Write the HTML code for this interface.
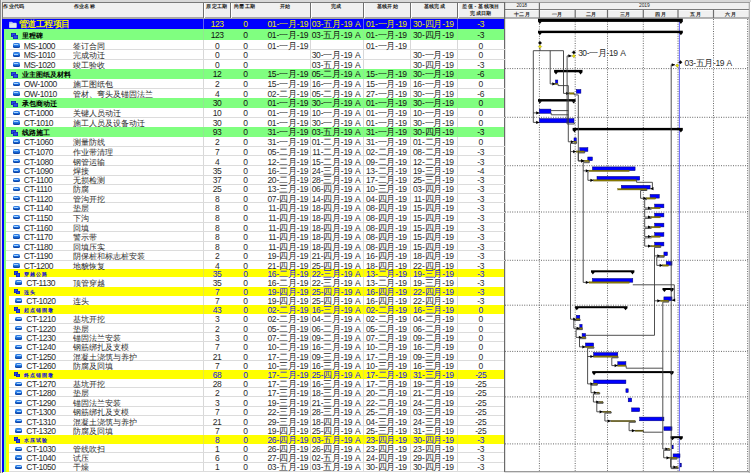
<!DOCTYPE html><html><head><meta charset="utf-8"><style>
*{margin:0;padding:0;box-sizing:border-box}
html,body{width:751px;height:473px;overflow:hidden;background:#fff;position:relative;font-family:"Liberation Sans",sans-serif}
.a{position:absolute}
.t{position:absolute;white-space:nowrap;font-size:8.5px;line-height:10px;color:#2a2a2a;letter-spacing:-0.45px}
.t em{font-style:normal;padding:0 0.35px}
.t em.sp{padding:0 0.5px}
.t i{font-style:normal;font-size:8.6px;line-height:1px;vertical-align:baseline}
.ic{position:absolute;width:6.6px;height:4.6px;border-radius:1.8px;background:linear-gradient(#2a70d8,#3a90f0 35%,#1a68d8 60%,#0a48b0);box-shadow:inset 0 -0.6px 0 #083890}
.ic:after{content:"";position:absolute;left:1.4px;right:1.4px;top:1.3px;height:0.8px;background:#a8d4ff}
.wi{position:absolute;width:4.2px;height:4px;background:#2a48e8;box-shadow:inset 0 0 0 0.6px #10209a}
.hd{position:absolute;white-space:nowrap;font-size:5.1px;line-height:6px;color:#1a1a1a;font-weight:bold;letter-spacing:0.35px}
</style></head><body><div class="a" style="left:0;top:0;width:751px;height:1.6px;background:#d8d8d8"></div>
<div class="a" style="left:0;top:1.6px;width:751px;height:1.1px;background:#787878"></div>
<div class="a" style="left:0;top:0;width:0.9px;height:473px;background:#909090"></div>
<div class="a" style="left:0.9px;top:0;width:0.8px;height:473px;background:#e8e8e8"></div>
<div class="a" style="left:1.6px;top:1.6px;width:1px;height:472px;background:#787878"></div>
<div class="a" style="left:2.6px;top:2.7px;width:746px;height:15.5px;background:#f0f0f0"></div>
<div class="a" style="left:2.6px;top:17.4px;width:502px;height:1.2px;background:#a8a8a8"></div>
<div class="a" style="left:202.6px;top:2.7px;width:1.2px;height:15.5px;background:#6e6e6e"></div>
<div class="a" style="left:203.8px;top:2.7px;width:0.9px;height:15.5px;background:#fff"></div>
<div class="a" style="left:229.9px;top:2.7px;width:1.2px;height:15.5px;background:#6e6e6e"></div>
<div class="a" style="left:231.1px;top:2.7px;width:0.9px;height:15.5px;background:#fff"></div>
<div class="a" style="left:309.9px;top:2.7px;width:1.2px;height:15.5px;background:#6e6e6e"></div>
<div class="a" style="left:311.1px;top:2.7px;width:0.9px;height:15.5px;background:#fff"></div>
<div class="a" style="left:362.5px;top:2.7px;width:1.2px;height:15.5px;background:#6e6e6e"></div>
<div class="a" style="left:363.7px;top:2.7px;width:0.9px;height:15.5px;background:#fff"></div>
<div class="a" style="left:409.6px;top:2.7px;width:1.2px;height:15.5px;background:#6e6e6e"></div>
<div class="a" style="left:410.8px;top:2.7px;width:0.9px;height:15.5px;background:#fff"></div>
<div class="a" style="left:456.6px;top:2.7px;width:1.2px;height:15.5px;background:#6e6e6e"></div>
<div class="a" style="left:457.8px;top:2.7px;width:0.9px;height:15.5px;background:#fff"></div>
<div class="a" style="left:2.2px;top:19.0px;width:502.3px;height:10.40px;background:#0000ff"></div>
<div class="a" style="left:203.1px;top:19.0px;width:1px;height:10.40px;background:#6060f0"></div>
<div class="a" style="left:310.0px;top:19.0px;width:1px;height:10.40px;background:#6060f0"></div>
<div class="a" style="left:362.6px;top:19.0px;width:1px;height:10.40px;background:#6060f0"></div>
<div class="a" style="left:409.7px;top:19.0px;width:1px;height:10.40px;background:#6060f0"></div>
<div class="a" style="left:456.7px;top:19.0px;width:1px;height:10.40px;background:#6060f0"></div>
<div class="a" style="left:2.2px;top:29.4px;width:502.3px;height:11.00px;background:#80ff80"></div>
<div class="a" style="left:2.2px;top:29.4px;width:1.9px;height:11.60px;background:#0000ff"></div>
<div class="a" style="left:203.1px;top:29.4px;width:1px;height:11.00px;background:#90e890"></div>
<div class="a" style="left:310.0px;top:29.4px;width:1px;height:11.00px;background:#90e890"></div>
<div class="a" style="left:362.6px;top:29.4px;width:1px;height:11.00px;background:#90e890"></div>
<div class="a" style="left:409.7px;top:29.4px;width:1px;height:11.00px;background:#90e890"></div>
<div class="a" style="left:456.7px;top:29.4px;width:1px;height:11.00px;background:#90e890"></div>
<div class="a" style="left:2.2px;top:40.4px;width:502.3px;height:9.30px;background:#ffffff"></div>
<div class="a" style="left:2.2px;top:40.4px;width:1.9px;height:9.90px;background:#0000ff"></div>
<div class="a" style="left:4.1px;top:40.4px;width:1.9px;height:9.90px;background:#80ff80"></div>
<div class="a" style="left:203.1px;top:40.4px;width:1px;height:9.30px;background:#d8d8d8"></div>
<div class="a" style="left:310.0px;top:40.4px;width:1px;height:9.30px;background:#d8d8d8"></div>
<div class="a" style="left:362.6px;top:40.4px;width:1px;height:9.30px;background:#d8d8d8"></div>
<div class="a" style="left:409.7px;top:40.4px;width:1px;height:9.30px;background:#d8d8d8"></div>
<div class="a" style="left:456.7px;top:40.4px;width:1px;height:9.30px;background:#d8d8d8"></div>
<div class="a" style="left:2.2px;top:49.7px;width:502.3px;height:9.60px;background:#ffffff"></div>
<div class="a" style="left:2.2px;top:49.7px;width:1.9px;height:10.20px;background:#0000ff"></div>
<div class="a" style="left:4.1px;top:49.7px;width:1.9px;height:10.20px;background:#80ff80"></div>
<div class="a" style="left:203.1px;top:49.7px;width:1px;height:9.60px;background:#d8d8d8"></div>
<div class="a" style="left:310.0px;top:49.7px;width:1px;height:9.60px;background:#d8d8d8"></div>
<div class="a" style="left:362.6px;top:49.7px;width:1px;height:9.60px;background:#d8d8d8"></div>
<div class="a" style="left:409.7px;top:49.7px;width:1px;height:9.60px;background:#d8d8d8"></div>
<div class="a" style="left:456.7px;top:49.7px;width:1px;height:9.60px;background:#d8d8d8"></div>
<div class="a" style="left:2.2px;top:59.3px;width:502.3px;height:9.30px;background:#ffffff"></div>
<div class="a" style="left:2.2px;top:59.3px;width:1.9px;height:9.90px;background:#0000ff"></div>
<div class="a" style="left:4.1px;top:59.3px;width:1.9px;height:9.90px;background:#80ff80"></div>
<div class="a" style="left:203.1px;top:59.3px;width:1px;height:9.30px;background:#d8d8d8"></div>
<div class="a" style="left:310.0px;top:59.3px;width:1px;height:9.30px;background:#d8d8d8"></div>
<div class="a" style="left:362.6px;top:59.3px;width:1px;height:9.30px;background:#d8d8d8"></div>
<div class="a" style="left:409.7px;top:59.3px;width:1px;height:9.30px;background:#d8d8d8"></div>
<div class="a" style="left:456.7px;top:59.3px;width:1px;height:9.30px;background:#d8d8d8"></div>
<div class="a" style="left:2.2px;top:68.6px;width:502.3px;height:10.20px;background:#80ff80"></div>
<div class="a" style="left:2.2px;top:68.6px;width:1.9px;height:10.80px;background:#0000ff"></div>
<div class="a" style="left:203.1px;top:68.6px;width:1px;height:10.20px;background:#90e890"></div>
<div class="a" style="left:310.0px;top:68.6px;width:1px;height:10.20px;background:#90e890"></div>
<div class="a" style="left:362.6px;top:68.6px;width:1px;height:10.20px;background:#90e890"></div>
<div class="a" style="left:409.7px;top:68.6px;width:1px;height:10.20px;background:#90e890"></div>
<div class="a" style="left:456.7px;top:68.6px;width:1px;height:10.20px;background:#90e890"></div>
<div class="a" style="left:2.2px;top:78.8px;width:502.3px;height:9.50px;background:#ffffff"></div>
<div class="a" style="left:2.2px;top:78.8px;width:1.9px;height:10.10px;background:#0000ff"></div>
<div class="a" style="left:4.1px;top:78.8px;width:1.9px;height:10.10px;background:#80ff80"></div>
<div class="a" style="left:203.1px;top:78.8px;width:1px;height:9.50px;background:#d8d8d8"></div>
<div class="a" style="left:310.0px;top:78.8px;width:1px;height:9.50px;background:#d8d8d8"></div>
<div class="a" style="left:362.6px;top:78.8px;width:1px;height:9.50px;background:#d8d8d8"></div>
<div class="a" style="left:409.7px;top:78.8px;width:1px;height:9.50px;background:#d8d8d8"></div>
<div class="a" style="left:456.7px;top:78.8px;width:1px;height:9.50px;background:#d8d8d8"></div>
<div class="a" style="left:2.2px;top:88.3px;width:502.3px;height:9.50px;background:#ffffff"></div>
<div class="a" style="left:2.2px;top:88.3px;width:1.9px;height:10.10px;background:#0000ff"></div>
<div class="a" style="left:4.1px;top:88.3px;width:1.9px;height:10.10px;background:#80ff80"></div>
<div class="a" style="left:203.1px;top:88.3px;width:1px;height:9.50px;background:#d8d8d8"></div>
<div class="a" style="left:310.0px;top:88.3px;width:1px;height:9.50px;background:#d8d8d8"></div>
<div class="a" style="left:362.6px;top:88.3px;width:1px;height:9.50px;background:#d8d8d8"></div>
<div class="a" style="left:409.7px;top:88.3px;width:1px;height:9.50px;background:#d8d8d8"></div>
<div class="a" style="left:456.7px;top:88.3px;width:1px;height:9.50px;background:#d8d8d8"></div>
<div class="a" style="left:2.2px;top:97.8px;width:502.3px;height:10.00px;background:#80ff80"></div>
<div class="a" style="left:2.2px;top:97.8px;width:1.9px;height:10.60px;background:#0000ff"></div>
<div class="a" style="left:203.1px;top:97.8px;width:1px;height:10.00px;background:#90e890"></div>
<div class="a" style="left:310.0px;top:97.8px;width:1px;height:10.00px;background:#90e890"></div>
<div class="a" style="left:362.6px;top:97.8px;width:1px;height:10.00px;background:#90e890"></div>
<div class="a" style="left:409.7px;top:97.8px;width:1px;height:10.00px;background:#90e890"></div>
<div class="a" style="left:456.7px;top:97.8px;width:1px;height:10.00px;background:#90e890"></div>
<div class="a" style="left:2.2px;top:107.8px;width:502.3px;height:9.50px;background:#ffffff"></div>
<div class="a" style="left:2.2px;top:107.8px;width:1.9px;height:10.10px;background:#0000ff"></div>
<div class="a" style="left:4.1px;top:107.8px;width:1.9px;height:10.10px;background:#80ff80"></div>
<div class="a" style="left:203.1px;top:107.8px;width:1px;height:9.50px;background:#d8d8d8"></div>
<div class="a" style="left:310.0px;top:107.8px;width:1px;height:9.50px;background:#d8d8d8"></div>
<div class="a" style="left:362.6px;top:107.8px;width:1px;height:9.50px;background:#d8d8d8"></div>
<div class="a" style="left:409.7px;top:107.8px;width:1px;height:9.50px;background:#d8d8d8"></div>
<div class="a" style="left:456.7px;top:107.8px;width:1px;height:9.50px;background:#d8d8d8"></div>
<div class="a" style="left:2.2px;top:117.3px;width:502.3px;height:9.30px;background:#ffffff"></div>
<div class="a" style="left:2.2px;top:117.3px;width:1.9px;height:9.90px;background:#0000ff"></div>
<div class="a" style="left:4.1px;top:117.3px;width:1.9px;height:9.90px;background:#80ff80"></div>
<div class="a" style="left:203.1px;top:117.3px;width:1px;height:9.30px;background:#d8d8d8"></div>
<div class="a" style="left:310.0px;top:117.3px;width:1px;height:9.30px;background:#d8d8d8"></div>
<div class="a" style="left:362.6px;top:117.3px;width:1px;height:9.30px;background:#d8d8d8"></div>
<div class="a" style="left:409.7px;top:117.3px;width:1px;height:9.30px;background:#d8d8d8"></div>
<div class="a" style="left:456.7px;top:117.3px;width:1px;height:9.30px;background:#d8d8d8"></div>
<div class="a" style="left:2.2px;top:126.6px;width:502.3px;height:10.10px;background:#80ff80"></div>
<div class="a" style="left:2.2px;top:126.6px;width:1.9px;height:10.70px;background:#0000ff"></div>
<div class="a" style="left:203.1px;top:126.6px;width:1px;height:10.10px;background:#90e890"></div>
<div class="a" style="left:310.0px;top:126.6px;width:1px;height:10.10px;background:#90e890"></div>
<div class="a" style="left:362.6px;top:126.6px;width:1px;height:10.10px;background:#90e890"></div>
<div class="a" style="left:409.7px;top:126.6px;width:1px;height:10.10px;background:#90e890"></div>
<div class="a" style="left:456.7px;top:126.6px;width:1px;height:10.10px;background:#90e890"></div>
<div class="a" style="left:2.2px;top:136.7px;width:502.3px;height:9.80px;background:#ffffff"></div>
<div class="a" style="left:2.2px;top:136.7px;width:1.9px;height:10.40px;background:#0000ff"></div>
<div class="a" style="left:4.1px;top:136.7px;width:1.9px;height:10.40px;background:#80ff80"></div>
<div class="a" style="left:203.1px;top:136.7px;width:1px;height:9.80px;background:#d8d8d8"></div>
<div class="a" style="left:310.0px;top:136.7px;width:1px;height:9.80px;background:#d8d8d8"></div>
<div class="a" style="left:362.6px;top:136.7px;width:1px;height:9.80px;background:#d8d8d8"></div>
<div class="a" style="left:409.7px;top:136.7px;width:1px;height:9.80px;background:#d8d8d8"></div>
<div class="a" style="left:456.7px;top:136.7px;width:1px;height:9.80px;background:#d8d8d8"></div>
<div class="a" style="left:2.2px;top:146.5px;width:502.3px;height:9.30px;background:#ffffff"></div>
<div class="a" style="left:2.2px;top:146.5px;width:1.9px;height:9.90px;background:#0000ff"></div>
<div class="a" style="left:4.1px;top:146.5px;width:1.9px;height:9.90px;background:#80ff80"></div>
<div class="a" style="left:203.1px;top:146.5px;width:1px;height:9.30px;background:#d8d8d8"></div>
<div class="a" style="left:310.0px;top:146.5px;width:1px;height:9.30px;background:#d8d8d8"></div>
<div class="a" style="left:362.6px;top:146.5px;width:1px;height:9.30px;background:#d8d8d8"></div>
<div class="a" style="left:409.7px;top:146.5px;width:1px;height:9.30px;background:#d8d8d8"></div>
<div class="a" style="left:456.7px;top:146.5px;width:1px;height:9.30px;background:#d8d8d8"></div>
<div class="a" style="left:2.2px;top:155.8px;width:502.3px;height:9.90px;background:#ffffff"></div>
<div class="a" style="left:2.2px;top:155.8px;width:1.9px;height:10.50px;background:#0000ff"></div>
<div class="a" style="left:4.1px;top:155.8px;width:1.9px;height:10.50px;background:#80ff80"></div>
<div class="a" style="left:203.1px;top:155.8px;width:1px;height:9.90px;background:#d8d8d8"></div>
<div class="a" style="left:310.0px;top:155.8px;width:1px;height:9.90px;background:#d8d8d8"></div>
<div class="a" style="left:362.6px;top:155.8px;width:1px;height:9.90px;background:#d8d8d8"></div>
<div class="a" style="left:409.7px;top:155.8px;width:1px;height:9.90px;background:#d8d8d8"></div>
<div class="a" style="left:456.7px;top:155.8px;width:1px;height:9.90px;background:#d8d8d8"></div>
<div class="a" style="left:2.2px;top:165.7px;width:502.3px;height:9.50px;background:#ffffff"></div>
<div class="a" style="left:2.2px;top:165.7px;width:1.9px;height:10.10px;background:#0000ff"></div>
<div class="a" style="left:4.1px;top:165.7px;width:1.9px;height:10.10px;background:#80ff80"></div>
<div class="a" style="left:203.1px;top:165.7px;width:1px;height:9.50px;background:#d8d8d8"></div>
<div class="a" style="left:310.0px;top:165.7px;width:1px;height:9.50px;background:#d8d8d8"></div>
<div class="a" style="left:362.6px;top:165.7px;width:1px;height:9.50px;background:#d8d8d8"></div>
<div class="a" style="left:409.7px;top:165.7px;width:1px;height:9.50px;background:#d8d8d8"></div>
<div class="a" style="left:456.7px;top:165.7px;width:1px;height:9.50px;background:#d8d8d8"></div>
<div class="a" style="left:2.2px;top:175.2px;width:502.3px;height:8.90px;background:#ffffff"></div>
<div class="a" style="left:2.2px;top:175.2px;width:1.9px;height:9.50px;background:#0000ff"></div>
<div class="a" style="left:4.1px;top:175.2px;width:1.9px;height:9.50px;background:#80ff80"></div>
<div class="a" style="left:203.1px;top:175.2px;width:1px;height:8.90px;background:#d8d8d8"></div>
<div class="a" style="left:310.0px;top:175.2px;width:1px;height:8.90px;background:#d8d8d8"></div>
<div class="a" style="left:362.6px;top:175.2px;width:1px;height:8.90px;background:#d8d8d8"></div>
<div class="a" style="left:409.7px;top:175.2px;width:1px;height:8.90px;background:#d8d8d8"></div>
<div class="a" style="left:456.7px;top:175.2px;width:1px;height:8.90px;background:#d8d8d8"></div>
<div class="a" style="left:2.2px;top:184.1px;width:502.3px;height:9.10px;background:#ffffff"></div>
<div class="a" style="left:2.2px;top:184.1px;width:1.9px;height:9.70px;background:#0000ff"></div>
<div class="a" style="left:4.1px;top:184.1px;width:1.9px;height:9.70px;background:#80ff80"></div>
<div class="a" style="left:203.1px;top:184.1px;width:1px;height:9.10px;background:#d8d8d8"></div>
<div class="a" style="left:310.0px;top:184.1px;width:1px;height:9.10px;background:#d8d8d8"></div>
<div class="a" style="left:362.6px;top:184.1px;width:1px;height:9.10px;background:#d8d8d8"></div>
<div class="a" style="left:409.7px;top:184.1px;width:1px;height:9.10px;background:#d8d8d8"></div>
<div class="a" style="left:456.7px;top:184.1px;width:1px;height:9.10px;background:#d8d8d8"></div>
<div class="a" style="left:2.2px;top:193.2px;width:502.3px;height:9.70px;background:#ffffff"></div>
<div class="a" style="left:2.2px;top:193.2px;width:1.9px;height:10.30px;background:#0000ff"></div>
<div class="a" style="left:4.1px;top:193.2px;width:1.9px;height:10.30px;background:#80ff80"></div>
<div class="a" style="left:203.1px;top:193.2px;width:1px;height:9.70px;background:#d8d8d8"></div>
<div class="a" style="left:310.0px;top:193.2px;width:1px;height:9.70px;background:#d8d8d8"></div>
<div class="a" style="left:362.6px;top:193.2px;width:1px;height:9.70px;background:#d8d8d8"></div>
<div class="a" style="left:409.7px;top:193.2px;width:1px;height:9.70px;background:#d8d8d8"></div>
<div class="a" style="left:456.7px;top:193.2px;width:1px;height:9.70px;background:#d8d8d8"></div>
<div class="a" style="left:2.2px;top:202.9px;width:502.3px;height:9.10px;background:#ffffff"></div>
<div class="a" style="left:2.2px;top:202.9px;width:1.9px;height:9.70px;background:#0000ff"></div>
<div class="a" style="left:4.1px;top:202.9px;width:1.9px;height:9.70px;background:#80ff80"></div>
<div class="a" style="left:203.1px;top:202.9px;width:1px;height:9.10px;background:#d8d8d8"></div>
<div class="a" style="left:310.0px;top:202.9px;width:1px;height:9.10px;background:#d8d8d8"></div>
<div class="a" style="left:362.6px;top:202.9px;width:1px;height:9.10px;background:#d8d8d8"></div>
<div class="a" style="left:409.7px;top:202.9px;width:1px;height:9.10px;background:#d8d8d8"></div>
<div class="a" style="left:456.7px;top:202.9px;width:1px;height:9.10px;background:#d8d8d8"></div>
<div class="a" style="left:2.2px;top:212.0px;width:502.3px;height:10.00px;background:#ffffff"></div>
<div class="a" style="left:2.2px;top:212.0px;width:1.9px;height:10.60px;background:#0000ff"></div>
<div class="a" style="left:4.1px;top:212.0px;width:1.9px;height:10.60px;background:#80ff80"></div>
<div class="a" style="left:203.1px;top:212.0px;width:1px;height:10.00px;background:#d8d8d8"></div>
<div class="a" style="left:310.0px;top:212.0px;width:1px;height:10.00px;background:#d8d8d8"></div>
<div class="a" style="left:362.6px;top:212.0px;width:1px;height:10.00px;background:#d8d8d8"></div>
<div class="a" style="left:409.7px;top:212.0px;width:1px;height:10.00px;background:#d8d8d8"></div>
<div class="a" style="left:456.7px;top:212.0px;width:1px;height:10.00px;background:#d8d8d8"></div>
<div class="a" style="left:2.2px;top:222.0px;width:502.3px;height:9.50px;background:#ffffff"></div>
<div class="a" style="left:2.2px;top:222.0px;width:1.9px;height:10.10px;background:#0000ff"></div>
<div class="a" style="left:4.1px;top:222.0px;width:1.9px;height:10.10px;background:#80ff80"></div>
<div class="a" style="left:203.1px;top:222.0px;width:1px;height:9.50px;background:#d8d8d8"></div>
<div class="a" style="left:310.0px;top:222.0px;width:1px;height:9.50px;background:#d8d8d8"></div>
<div class="a" style="left:362.6px;top:222.0px;width:1px;height:9.50px;background:#d8d8d8"></div>
<div class="a" style="left:409.7px;top:222.0px;width:1px;height:9.50px;background:#d8d8d8"></div>
<div class="a" style="left:456.7px;top:222.0px;width:1px;height:9.50px;background:#d8d8d8"></div>
<div class="a" style="left:2.2px;top:231.5px;width:502.3px;height:9.50px;background:#ffffff"></div>
<div class="a" style="left:2.2px;top:231.5px;width:1.9px;height:10.10px;background:#0000ff"></div>
<div class="a" style="left:4.1px;top:231.5px;width:1.9px;height:10.10px;background:#80ff80"></div>
<div class="a" style="left:203.1px;top:231.5px;width:1px;height:9.50px;background:#d8d8d8"></div>
<div class="a" style="left:310.0px;top:231.5px;width:1px;height:9.50px;background:#d8d8d8"></div>
<div class="a" style="left:362.6px;top:231.5px;width:1px;height:9.50px;background:#d8d8d8"></div>
<div class="a" style="left:409.7px;top:231.5px;width:1px;height:9.50px;background:#d8d8d8"></div>
<div class="a" style="left:456.7px;top:231.5px;width:1px;height:9.50px;background:#d8d8d8"></div>
<div class="a" style="left:2.2px;top:241.0px;width:502.3px;height:9.80px;background:#ffffff"></div>
<div class="a" style="left:2.2px;top:241.0px;width:1.9px;height:10.40px;background:#0000ff"></div>
<div class="a" style="left:4.1px;top:241.0px;width:1.9px;height:10.40px;background:#80ff80"></div>
<div class="a" style="left:203.1px;top:241.0px;width:1px;height:9.80px;background:#d8d8d8"></div>
<div class="a" style="left:310.0px;top:241.0px;width:1px;height:9.80px;background:#d8d8d8"></div>
<div class="a" style="left:362.6px;top:241.0px;width:1px;height:9.80px;background:#d8d8d8"></div>
<div class="a" style="left:409.7px;top:241.0px;width:1px;height:9.80px;background:#d8d8d8"></div>
<div class="a" style="left:456.7px;top:241.0px;width:1px;height:9.80px;background:#d8d8d8"></div>
<div class="a" style="left:2.2px;top:250.8px;width:502.3px;height:9.50px;background:#ffffff"></div>
<div class="a" style="left:2.2px;top:250.8px;width:1.9px;height:10.10px;background:#0000ff"></div>
<div class="a" style="left:4.1px;top:250.8px;width:1.9px;height:10.10px;background:#80ff80"></div>
<div class="a" style="left:203.1px;top:250.8px;width:1px;height:9.50px;background:#d8d8d8"></div>
<div class="a" style="left:310.0px;top:250.8px;width:1px;height:9.50px;background:#d8d8d8"></div>
<div class="a" style="left:362.6px;top:250.8px;width:1px;height:9.50px;background:#d8d8d8"></div>
<div class="a" style="left:409.7px;top:250.8px;width:1px;height:9.50px;background:#d8d8d8"></div>
<div class="a" style="left:456.7px;top:250.8px;width:1px;height:9.50px;background:#d8d8d8"></div>
<div class="a" style="left:2.2px;top:260.3px;width:502.3px;height:9.00px;background:#ffffff"></div>
<div class="a" style="left:2.2px;top:260.3px;width:1.9px;height:9.60px;background:#0000ff"></div>
<div class="a" style="left:4.1px;top:260.3px;width:1.9px;height:9.60px;background:#80ff80"></div>
<div class="a" style="left:203.1px;top:260.3px;width:1px;height:9.00px;background:#d8d8d8"></div>
<div class="a" style="left:310.0px;top:260.3px;width:1px;height:9.00px;background:#d8d8d8"></div>
<div class="a" style="left:362.6px;top:260.3px;width:1px;height:9.00px;background:#d8d8d8"></div>
<div class="a" style="left:409.7px;top:260.3px;width:1px;height:9.00px;background:#d8d8d8"></div>
<div class="a" style="left:456.7px;top:260.3px;width:1px;height:9.00px;background:#d8d8d8"></div>
<div class="a" style="left:2.2px;top:269.3px;width:502.3px;height:8.00px;background:#ffff00"></div>
<div class="a" style="left:2.2px;top:269.3px;width:1.9px;height:8.60px;background:#0000ff"></div>
<div class="a" style="left:4.1px;top:269.3px;width:1.9px;height:8.60px;background:#80ff80"></div>
<div class="a" style="left:203.1px;top:269.3px;width:1px;height:8.00px;background:#e8e840"></div>
<div class="a" style="left:310.0px;top:269.3px;width:1px;height:8.00px;background:#e8e840"></div>
<div class="a" style="left:362.6px;top:269.3px;width:1px;height:8.00px;background:#e8e840"></div>
<div class="a" style="left:409.7px;top:269.3px;width:1px;height:8.00px;background:#e8e840"></div>
<div class="a" style="left:456.7px;top:269.3px;width:1px;height:8.00px;background:#e8e840"></div>
<div class="a" style="left:2.2px;top:277.3px;width:502.3px;height:9.70px;background:#ffffff"></div>
<div class="a" style="left:2.2px;top:277.3px;width:1.9px;height:10.30px;background:#0000ff"></div>
<div class="a" style="left:4.1px;top:277.3px;width:1.9px;height:10.30px;background:#80ff80"></div>
<div class="a" style="left:6.0px;top:277.3px;width:2.8px;height:10.30px;background:#ffff00"></div>
<div class="a" style="left:203.1px;top:277.3px;width:1px;height:9.70px;background:#d8d8d8"></div>
<div class="a" style="left:310.0px;top:277.3px;width:1px;height:9.70px;background:#d8d8d8"></div>
<div class="a" style="left:362.6px;top:277.3px;width:1px;height:9.70px;background:#d8d8d8"></div>
<div class="a" style="left:409.7px;top:277.3px;width:1px;height:9.70px;background:#d8d8d8"></div>
<div class="a" style="left:456.7px;top:277.3px;width:1px;height:9.70px;background:#d8d8d8"></div>
<div class="a" style="left:2.2px;top:287.0px;width:502.3px;height:8.70px;background:#ffff00"></div>
<div class="a" style="left:2.2px;top:287.0px;width:1.9px;height:9.30px;background:#0000ff"></div>
<div class="a" style="left:4.1px;top:287.0px;width:1.9px;height:9.30px;background:#80ff80"></div>
<div class="a" style="left:203.1px;top:287.0px;width:1px;height:8.70px;background:#e8e840"></div>
<div class="a" style="left:310.0px;top:287.0px;width:1px;height:8.70px;background:#e8e840"></div>
<div class="a" style="left:362.6px;top:287.0px;width:1px;height:8.70px;background:#e8e840"></div>
<div class="a" style="left:409.7px;top:287.0px;width:1px;height:8.70px;background:#e8e840"></div>
<div class="a" style="left:456.7px;top:287.0px;width:1px;height:8.70px;background:#e8e840"></div>
<div class="a" style="left:2.2px;top:295.7px;width:502.3px;height:9.50px;background:#ffffff"></div>
<div class="a" style="left:2.2px;top:295.7px;width:1.9px;height:10.10px;background:#0000ff"></div>
<div class="a" style="left:4.1px;top:295.7px;width:1.9px;height:10.10px;background:#80ff80"></div>
<div class="a" style="left:6.0px;top:295.7px;width:2.8px;height:10.10px;background:#ffff00"></div>
<div class="a" style="left:203.1px;top:295.7px;width:1px;height:9.50px;background:#d8d8d8"></div>
<div class="a" style="left:310.0px;top:295.7px;width:1px;height:9.50px;background:#d8d8d8"></div>
<div class="a" style="left:362.6px;top:295.7px;width:1px;height:9.50px;background:#d8d8d8"></div>
<div class="a" style="left:409.7px;top:295.7px;width:1px;height:9.50px;background:#d8d8d8"></div>
<div class="a" style="left:456.7px;top:295.7px;width:1px;height:9.50px;background:#d8d8d8"></div>
<div class="a" style="left:2.2px;top:305.2px;width:502.3px;height:8.90px;background:#ffff00"></div>
<div class="a" style="left:2.2px;top:305.2px;width:1.9px;height:9.50px;background:#0000ff"></div>
<div class="a" style="left:4.1px;top:305.2px;width:1.9px;height:9.50px;background:#80ff80"></div>
<div class="a" style="left:203.1px;top:305.2px;width:1px;height:8.90px;background:#e8e840"></div>
<div class="a" style="left:310.0px;top:305.2px;width:1px;height:8.90px;background:#e8e840"></div>
<div class="a" style="left:362.6px;top:305.2px;width:1px;height:8.90px;background:#e8e840"></div>
<div class="a" style="left:409.7px;top:305.2px;width:1px;height:8.90px;background:#e8e840"></div>
<div class="a" style="left:456.7px;top:305.2px;width:1px;height:8.90px;background:#e8e840"></div>
<div class="a" style="left:2.2px;top:314.1px;width:502.3px;height:9.10px;background:#ffffff"></div>
<div class="a" style="left:2.2px;top:314.1px;width:1.9px;height:9.70px;background:#0000ff"></div>
<div class="a" style="left:4.1px;top:314.1px;width:1.9px;height:9.70px;background:#80ff80"></div>
<div class="a" style="left:6.0px;top:314.1px;width:2.8px;height:9.70px;background:#ffff00"></div>
<div class="a" style="left:203.1px;top:314.1px;width:1px;height:9.10px;background:#d8d8d8"></div>
<div class="a" style="left:310.0px;top:314.1px;width:1px;height:9.10px;background:#d8d8d8"></div>
<div class="a" style="left:362.6px;top:314.1px;width:1px;height:9.10px;background:#d8d8d8"></div>
<div class="a" style="left:409.7px;top:314.1px;width:1px;height:9.10px;background:#d8d8d8"></div>
<div class="a" style="left:456.7px;top:314.1px;width:1px;height:9.10px;background:#d8d8d8"></div>
<div class="a" style="left:2.2px;top:323.2px;width:502.3px;height:9.10px;background:#ffffff"></div>
<div class="a" style="left:2.2px;top:323.2px;width:1.9px;height:9.70px;background:#0000ff"></div>
<div class="a" style="left:4.1px;top:323.2px;width:1.9px;height:9.70px;background:#80ff80"></div>
<div class="a" style="left:6.0px;top:323.2px;width:2.8px;height:9.70px;background:#ffff00"></div>
<div class="a" style="left:203.1px;top:323.2px;width:1px;height:9.10px;background:#d8d8d8"></div>
<div class="a" style="left:310.0px;top:323.2px;width:1px;height:9.10px;background:#d8d8d8"></div>
<div class="a" style="left:362.6px;top:323.2px;width:1px;height:9.10px;background:#d8d8d8"></div>
<div class="a" style="left:409.7px;top:323.2px;width:1px;height:9.10px;background:#d8d8d8"></div>
<div class="a" style="left:456.7px;top:323.2px;width:1px;height:9.10px;background:#d8d8d8"></div>
<div class="a" style="left:2.2px;top:332.3px;width:502.3px;height:9.50px;background:#ffffff"></div>
<div class="a" style="left:2.2px;top:332.3px;width:1.9px;height:10.10px;background:#0000ff"></div>
<div class="a" style="left:4.1px;top:332.3px;width:1.9px;height:10.10px;background:#80ff80"></div>
<div class="a" style="left:6.0px;top:332.3px;width:2.8px;height:10.10px;background:#ffff00"></div>
<div class="a" style="left:203.1px;top:332.3px;width:1px;height:9.50px;background:#d8d8d8"></div>
<div class="a" style="left:310.0px;top:332.3px;width:1px;height:9.50px;background:#d8d8d8"></div>
<div class="a" style="left:362.6px;top:332.3px;width:1px;height:9.50px;background:#d8d8d8"></div>
<div class="a" style="left:409.7px;top:332.3px;width:1px;height:9.50px;background:#d8d8d8"></div>
<div class="a" style="left:456.7px;top:332.3px;width:1px;height:9.50px;background:#d8d8d8"></div>
<div class="a" style="left:2.2px;top:341.8px;width:502.3px;height:9.60px;background:#ffffff"></div>
<div class="a" style="left:2.2px;top:341.8px;width:1.9px;height:10.20px;background:#0000ff"></div>
<div class="a" style="left:4.1px;top:341.8px;width:1.9px;height:10.20px;background:#80ff80"></div>
<div class="a" style="left:6.0px;top:341.8px;width:2.8px;height:10.20px;background:#ffff00"></div>
<div class="a" style="left:203.1px;top:341.8px;width:1px;height:9.60px;background:#d8d8d8"></div>
<div class="a" style="left:310.0px;top:341.8px;width:1px;height:9.60px;background:#d8d8d8"></div>
<div class="a" style="left:362.6px;top:341.8px;width:1px;height:9.60px;background:#d8d8d8"></div>
<div class="a" style="left:409.7px;top:341.8px;width:1px;height:9.60px;background:#d8d8d8"></div>
<div class="a" style="left:456.7px;top:341.8px;width:1px;height:9.60px;background:#d8d8d8"></div>
<div class="a" style="left:2.2px;top:351.4px;width:502.3px;height:9.10px;background:#ffffff"></div>
<div class="a" style="left:2.2px;top:351.4px;width:1.9px;height:9.70px;background:#0000ff"></div>
<div class="a" style="left:4.1px;top:351.4px;width:1.9px;height:9.70px;background:#80ff80"></div>
<div class="a" style="left:6.0px;top:351.4px;width:2.8px;height:9.70px;background:#ffff00"></div>
<div class="a" style="left:203.1px;top:351.4px;width:1px;height:9.10px;background:#d8d8d8"></div>
<div class="a" style="left:310.0px;top:351.4px;width:1px;height:9.10px;background:#d8d8d8"></div>
<div class="a" style="left:362.6px;top:351.4px;width:1px;height:9.10px;background:#d8d8d8"></div>
<div class="a" style="left:409.7px;top:351.4px;width:1px;height:9.10px;background:#d8d8d8"></div>
<div class="a" style="left:456.7px;top:351.4px;width:1px;height:9.10px;background:#d8d8d8"></div>
<div class="a" style="left:2.2px;top:360.5px;width:502.3px;height:9.60px;background:#ffffff"></div>
<div class="a" style="left:2.2px;top:360.5px;width:1.9px;height:10.20px;background:#0000ff"></div>
<div class="a" style="left:4.1px;top:360.5px;width:1.9px;height:10.20px;background:#80ff80"></div>
<div class="a" style="left:6.0px;top:360.5px;width:2.8px;height:10.20px;background:#ffff00"></div>
<div class="a" style="left:203.1px;top:360.5px;width:1px;height:9.60px;background:#d8d8d8"></div>
<div class="a" style="left:310.0px;top:360.5px;width:1px;height:9.60px;background:#d8d8d8"></div>
<div class="a" style="left:362.6px;top:360.5px;width:1px;height:9.60px;background:#d8d8d8"></div>
<div class="a" style="left:409.7px;top:360.5px;width:1px;height:9.60px;background:#d8d8d8"></div>
<div class="a" style="left:456.7px;top:360.5px;width:1px;height:9.60px;background:#d8d8d8"></div>
<div class="a" style="left:2.2px;top:370.1px;width:502.3px;height:8.70px;background:#ffff00"></div>
<div class="a" style="left:2.2px;top:370.1px;width:1.9px;height:9.30px;background:#0000ff"></div>
<div class="a" style="left:4.1px;top:370.1px;width:1.9px;height:9.30px;background:#80ff80"></div>
<div class="a" style="left:203.1px;top:370.1px;width:1px;height:8.70px;background:#e8e840"></div>
<div class="a" style="left:310.0px;top:370.1px;width:1px;height:8.70px;background:#e8e840"></div>
<div class="a" style="left:362.6px;top:370.1px;width:1px;height:8.70px;background:#e8e840"></div>
<div class="a" style="left:409.7px;top:370.1px;width:1px;height:8.70px;background:#e8e840"></div>
<div class="a" style="left:456.7px;top:370.1px;width:1px;height:8.70px;background:#e8e840"></div>
<div class="a" style="left:2.2px;top:378.8px;width:502.3px;height:8.80px;background:#ffffff"></div>
<div class="a" style="left:2.2px;top:378.8px;width:1.9px;height:9.40px;background:#0000ff"></div>
<div class="a" style="left:4.1px;top:378.8px;width:1.9px;height:9.40px;background:#80ff80"></div>
<div class="a" style="left:6.0px;top:378.8px;width:2.8px;height:9.40px;background:#ffff00"></div>
<div class="a" style="left:203.1px;top:378.8px;width:1px;height:8.80px;background:#d8d8d8"></div>
<div class="a" style="left:310.0px;top:378.8px;width:1px;height:8.80px;background:#d8d8d8"></div>
<div class="a" style="left:362.6px;top:378.8px;width:1px;height:8.80px;background:#d8d8d8"></div>
<div class="a" style="left:409.7px;top:378.8px;width:1px;height:8.80px;background:#d8d8d8"></div>
<div class="a" style="left:456.7px;top:378.8px;width:1px;height:8.80px;background:#d8d8d8"></div>
<div class="a" style="left:2.2px;top:387.6px;width:502.3px;height:9.30px;background:#ffffff"></div>
<div class="a" style="left:2.2px;top:387.6px;width:1.9px;height:9.90px;background:#0000ff"></div>
<div class="a" style="left:4.1px;top:387.6px;width:1.9px;height:9.90px;background:#80ff80"></div>
<div class="a" style="left:6.0px;top:387.6px;width:2.8px;height:9.90px;background:#ffff00"></div>
<div class="a" style="left:203.1px;top:387.6px;width:1px;height:9.30px;background:#d8d8d8"></div>
<div class="a" style="left:310.0px;top:387.6px;width:1px;height:9.30px;background:#d8d8d8"></div>
<div class="a" style="left:362.6px;top:387.6px;width:1px;height:9.30px;background:#d8d8d8"></div>
<div class="a" style="left:409.7px;top:387.6px;width:1px;height:9.30px;background:#d8d8d8"></div>
<div class="a" style="left:456.7px;top:387.6px;width:1px;height:9.30px;background:#d8d8d8"></div>
<div class="a" style="left:2.2px;top:396.9px;width:502.3px;height:9.80px;background:#ffffff"></div>
<div class="a" style="left:2.2px;top:396.9px;width:1.9px;height:10.40px;background:#0000ff"></div>
<div class="a" style="left:4.1px;top:396.9px;width:1.9px;height:10.40px;background:#80ff80"></div>
<div class="a" style="left:6.0px;top:396.9px;width:2.8px;height:10.40px;background:#ffff00"></div>
<div class="a" style="left:203.1px;top:396.9px;width:1px;height:9.80px;background:#d8d8d8"></div>
<div class="a" style="left:310.0px;top:396.9px;width:1px;height:9.80px;background:#d8d8d8"></div>
<div class="a" style="left:362.6px;top:396.9px;width:1px;height:9.80px;background:#d8d8d8"></div>
<div class="a" style="left:409.7px;top:396.9px;width:1px;height:9.80px;background:#d8d8d8"></div>
<div class="a" style="left:456.7px;top:396.9px;width:1px;height:9.80px;background:#d8d8d8"></div>
<div class="a" style="left:2.2px;top:406.7px;width:502.3px;height:9.20px;background:#ffffff"></div>
<div class="a" style="left:2.2px;top:406.7px;width:1.9px;height:9.80px;background:#0000ff"></div>
<div class="a" style="left:4.1px;top:406.7px;width:1.9px;height:9.80px;background:#80ff80"></div>
<div class="a" style="left:6.0px;top:406.7px;width:2.8px;height:9.80px;background:#ffff00"></div>
<div class="a" style="left:203.1px;top:406.7px;width:1px;height:9.20px;background:#d8d8d8"></div>
<div class="a" style="left:310.0px;top:406.7px;width:1px;height:9.20px;background:#d8d8d8"></div>
<div class="a" style="left:362.6px;top:406.7px;width:1px;height:9.20px;background:#d8d8d8"></div>
<div class="a" style="left:409.7px;top:406.7px;width:1px;height:9.20px;background:#d8d8d8"></div>
<div class="a" style="left:456.7px;top:406.7px;width:1px;height:9.20px;background:#d8d8d8"></div>
<div class="a" style="left:2.2px;top:415.9px;width:502.3px;height:9.70px;background:#ffffff"></div>
<div class="a" style="left:2.2px;top:415.9px;width:1.9px;height:10.30px;background:#0000ff"></div>
<div class="a" style="left:4.1px;top:415.9px;width:1.9px;height:10.30px;background:#80ff80"></div>
<div class="a" style="left:6.0px;top:415.9px;width:2.8px;height:10.30px;background:#ffff00"></div>
<div class="a" style="left:203.1px;top:415.9px;width:1px;height:9.70px;background:#d8d8d8"></div>
<div class="a" style="left:310.0px;top:415.9px;width:1px;height:9.70px;background:#d8d8d8"></div>
<div class="a" style="left:362.6px;top:415.9px;width:1px;height:9.70px;background:#d8d8d8"></div>
<div class="a" style="left:409.7px;top:415.9px;width:1px;height:9.70px;background:#d8d8d8"></div>
<div class="a" style="left:456.7px;top:415.9px;width:1px;height:9.70px;background:#d8d8d8"></div>
<div class="a" style="left:2.2px;top:425.6px;width:502.3px;height:9.60px;background:#ffffff"></div>
<div class="a" style="left:2.2px;top:425.6px;width:1.9px;height:10.20px;background:#0000ff"></div>
<div class="a" style="left:4.1px;top:425.6px;width:1.9px;height:10.20px;background:#80ff80"></div>
<div class="a" style="left:6.0px;top:425.6px;width:2.8px;height:10.20px;background:#ffff00"></div>
<div class="a" style="left:203.1px;top:425.6px;width:1px;height:9.60px;background:#d8d8d8"></div>
<div class="a" style="left:310.0px;top:425.6px;width:1px;height:9.60px;background:#d8d8d8"></div>
<div class="a" style="left:362.6px;top:425.6px;width:1px;height:9.60px;background:#d8d8d8"></div>
<div class="a" style="left:409.7px;top:425.6px;width:1px;height:9.60px;background:#d8d8d8"></div>
<div class="a" style="left:456.7px;top:425.6px;width:1px;height:9.60px;background:#d8d8d8"></div>
<div class="a" style="left:2.2px;top:435.2px;width:502.3px;height:8.70px;background:#ffff00"></div>
<div class="a" style="left:2.2px;top:435.2px;width:1.9px;height:9.30px;background:#0000ff"></div>
<div class="a" style="left:4.1px;top:435.2px;width:1.9px;height:9.30px;background:#80ff80"></div>
<div class="a" style="left:203.1px;top:435.2px;width:1px;height:8.70px;background:#e8e840"></div>
<div class="a" style="left:310.0px;top:435.2px;width:1px;height:8.70px;background:#e8e840"></div>
<div class="a" style="left:362.6px;top:435.2px;width:1px;height:8.70px;background:#e8e840"></div>
<div class="a" style="left:409.7px;top:435.2px;width:1px;height:8.70px;background:#e8e840"></div>
<div class="a" style="left:456.7px;top:435.2px;width:1px;height:8.70px;background:#e8e840"></div>
<div class="a" style="left:2.2px;top:443.9px;width:502.3px;height:8.80px;background:#ffffff"></div>
<div class="a" style="left:2.2px;top:443.9px;width:1.9px;height:9.40px;background:#0000ff"></div>
<div class="a" style="left:4.1px;top:443.9px;width:1.9px;height:9.40px;background:#80ff80"></div>
<div class="a" style="left:6.0px;top:443.9px;width:2.8px;height:9.40px;background:#ffff00"></div>
<div class="a" style="left:203.1px;top:443.9px;width:1px;height:8.80px;background:#d8d8d8"></div>
<div class="a" style="left:310.0px;top:443.9px;width:1px;height:8.80px;background:#d8d8d8"></div>
<div class="a" style="left:362.6px;top:443.9px;width:1px;height:8.80px;background:#d8d8d8"></div>
<div class="a" style="left:409.7px;top:443.9px;width:1px;height:8.80px;background:#d8d8d8"></div>
<div class="a" style="left:456.7px;top:443.9px;width:1px;height:8.80px;background:#d8d8d8"></div>
<div class="a" style="left:2.2px;top:452.7px;width:502.3px;height:9.30px;background:#ffffff"></div>
<div class="a" style="left:2.2px;top:452.7px;width:1.9px;height:9.90px;background:#0000ff"></div>
<div class="a" style="left:4.1px;top:452.7px;width:1.9px;height:9.90px;background:#80ff80"></div>
<div class="a" style="left:6.0px;top:452.7px;width:2.8px;height:9.90px;background:#ffff00"></div>
<div class="a" style="left:203.1px;top:452.7px;width:1px;height:9.30px;background:#d8d8d8"></div>
<div class="a" style="left:310.0px;top:452.7px;width:1px;height:9.30px;background:#d8d8d8"></div>
<div class="a" style="left:362.6px;top:452.7px;width:1px;height:9.30px;background:#d8d8d8"></div>
<div class="a" style="left:409.7px;top:452.7px;width:1px;height:9.30px;background:#d8d8d8"></div>
<div class="a" style="left:456.7px;top:452.7px;width:1px;height:9.30px;background:#d8d8d8"></div>
<div class="a" style="left:2.2px;top:462.0px;width:502.3px;height:9.20px;background:#ffffff"></div>
<div class="a" style="left:2.2px;top:462.0px;width:1.9px;height:9.80px;background:#0000ff"></div>
<div class="a" style="left:4.1px;top:462.0px;width:1.9px;height:9.80px;background:#80ff80"></div>
<div class="a" style="left:6.0px;top:462.0px;width:2.8px;height:9.80px;background:#ffff00"></div>
<div class="a" style="left:203.1px;top:462.0px;width:1px;height:9.20px;background:#d8d8d8"></div>
<div class="a" style="left:310.0px;top:462.0px;width:1px;height:9.20px;background:#d8d8d8"></div>
<div class="a" style="left:362.6px;top:462.0px;width:1px;height:9.20px;background:#d8d8d8"></div>
<div class="a" style="left:409.7px;top:462.0px;width:1px;height:9.20px;background:#d8d8d8"></div>
<div class="a" style="left:456.7px;top:462.0px;width:1px;height:9.20px;background:#d8d8d8"></div>
<svg class="a" style="left:0;top:0" width="751" height="473" viewBox="0 0 751 473"><rect x="505" y="2.7" width="244" height="15.5" fill="#f0f0f0"/><line x1="505" y1="9.6" x2="749" y2="9.6" stroke="#6e6e6e" stroke-width="1"/><line x1="505" y1="10.5" x2="749" y2="10.5" stroke="#ffffff" stroke-width="0.8"/><line x1="505" y1="18.0" x2="749" y2="18.0" stroke="#6e6e6e" stroke-width="1.2"/><line x1="539.4" y1="2.7" x2="539.4" y2="18" stroke="#6e6e6e" stroke-width="1.2"/><line x1="575.2" y1="10" x2="575.2" y2="18" stroke="#6e6e6e" stroke-width="1.2"/><line x1="607.5" y1="10" x2="607.5" y2="18" stroke="#6e6e6e" stroke-width="1.2"/><line x1="643.3" y1="10" x2="643.3" y2="18" stroke="#6e6e6e" stroke-width="1.2"/><line x1="678.0" y1="10" x2="678.0" y2="18" stroke="#6e6e6e" stroke-width="1.2"/><line x1="713.5" y1="10" x2="713.5" y2="18" stroke="#6e6e6e" stroke-width="1.2"/><line x1="749.3" y1="2" x2="749.3" y2="473" stroke="#8a8a8a" stroke-width="1"/><rect x="749.8" y="2" width="2" height="471" fill="#ffffff"/><line x1="539.4" y1="19" x2="539.4" y2="471" stroke="#404040" stroke-width="0.8" stroke-dasharray="1,1.4"/><line x1="575.2" y1="19" x2="575.2" y2="471" stroke="#404040" stroke-width="0.8" stroke-dasharray="1,1.4"/><line x1="607.5" y1="19" x2="607.5" y2="471" stroke="#404040" stroke-width="0.8" stroke-dasharray="1,1.4"/><line x1="643.3" y1="19" x2="643.3" y2="471" stroke="#404040" stroke-width="0.8" stroke-dasharray="1,1.4"/><line x1="678.0" y1="19" x2="678.0" y2="471" stroke="#404040" stroke-width="0.8" stroke-dasharray="1,1.4"/><line x1="713.5" y1="19" x2="713.5" y2="471" stroke="#404040" stroke-width="0.8" stroke-dasharray="1,1.4"/><line x1="747.6" y1="19" x2="747.6" y2="471" stroke="#404040" stroke-width="0.8" stroke-dasharray="1,1.4"/><line x1="505" y1="68.6" x2="748" y2="68.6" stroke="#404040" stroke-width="0.8" stroke-dasharray="1,1.4"/><line x1="505" y1="117.3" x2="748" y2="117.3" stroke="#404040" stroke-width="0.8" stroke-dasharray="1,1.4"/><line x1="505" y1="165.7" x2="748" y2="165.7" stroke="#404040" stroke-width="0.8" stroke-dasharray="1,1.4"/><line x1="505" y1="212.0" x2="748" y2="212.0" stroke="#404040" stroke-width="0.8" stroke-dasharray="1,1.4"/><line x1="505" y1="260.3" x2="748" y2="260.3" stroke="#404040" stroke-width="0.8" stroke-dasharray="1,1.4"/><line x1="505" y1="305.2" x2="748" y2="305.2" stroke="#404040" stroke-width="0.8" stroke-dasharray="1,1.4"/><line x1="505" y1="351.4" x2="748" y2="351.4" stroke="#404040" stroke-width="0.8" stroke-dasharray="1,1.4"/><line x1="505" y1="396.9" x2="748" y2="396.9" stroke="#404040" stroke-width="0.8" stroke-dasharray="1,1.4"/><line x1="505" y1="443.9" x2="748" y2="443.9" stroke="#404040" stroke-width="0.8" stroke-dasharray="1,1.4"/><line x1="679.4" y1="20.5" x2="679.4" y2="471" stroke="#5050ff" stroke-width="0.9"/><line x1="504.6" y1="2" x2="504.6" y2="472" stroke="#6a6a6a" stroke-width="1.2"/><line x1="504.5" y1="471.7" x2="749" y2="471.7" stroke="#7a7a7a" stroke-width="1.1"/><rect x="538.0" y="18.7" width="144.8" height="3.2" fill="#000"/><polygon points="538.0,21.6 541.8,21.6 539.9,24.0" fill="#000"/><polygon points="679.0,21.6 682.8,21.6 680.9,24.0" fill="#000"/><rect x="538.0" y="30.7" width="144.8" height="2.4" fill="#000"/><polygon points="538.0,32.8 541.8,32.8 539.9,35.2" fill="#000"/><polygon points="679.0,32.8 682.8,32.8 680.9,35.2" fill="#000"/><rect x="554.1" y="69.9" width="28.4" height="2.4" fill="#000"/><polygon points="554.1,72.0 557.9,72.0 556.0,74.4" fill="#000"/><polygon points="578.7,72.0 582.5,72.0 580.6,74.4" fill="#000"/><rect x="555.5" y="80.0" width="2.3" height="3.7" fill="#0000ff" stroke="#000070" stroke-width="0.5"/><rect x="555.5" y="83.2" width="2.3" height="1.5" fill="#8a7a00" stroke="#5a5000" stroke-width="0.3"/><rect x="576.3" y="89.5" width="4.6" height="3.7" fill="#0000ff" stroke="#000070" stroke-width="0.5"/><rect x="569.4" y="92.7" width="4.6" height="1.5" fill="#8a7a00" stroke="#5a5000" stroke-width="0.3"/><rect x="538.0" y="99.1" width="37.6" height="2.4" fill="#000"/><polygon points="538.0,101.2 541.8,101.2 539.9,103.6" fill="#000"/><polygon points="571.8,101.2 575.6,101.2 573.7,103.6" fill="#000"/><rect x="539.4" y="109.1" width="11.5" height="4.2" fill="#0000ff" stroke="#000070" stroke-width="0.5"/><rect x="539.4" y="118.6" width="34.6" height="4.2" fill="#0000ff" stroke="#000070" stroke-width="0.5"/><rect x="572.6" y="127.9" width="110.2" height="2.4" fill="#000"/><polygon points="572.6,130.0 576.4,130.0 574.5,132.4" fill="#000"/><polygon points="679.0,130.0 682.8,130.0 680.9,132.4" fill="#000"/><rect x="574.0" y="137.9" width="2.3" height="3.7" fill="#0000ff" stroke="#000070" stroke-width="0.5"/><rect x="574.0" y="141.1" width="2.3" height="1.5" fill="#8a7a00" stroke="#5a5000" stroke-width="0.3"/><rect x="579.8" y="147.7" width="8.1" height="3.7" fill="#0000ff" stroke="#000070" stroke-width="0.5"/><rect x="576.3" y="150.9" width="8.1" height="1.5" fill="#8a7a00" stroke="#5a5000" stroke-width="0.3"/><rect x="587.8" y="157.0" width="4.6" height="3.7" fill="#0000ff" stroke="#000070" stroke-width="0.5"/><rect x="584.4" y="160.2" width="4.6" height="1.5" fill="#8a7a00" stroke="#5a5000" stroke-width="0.3"/><rect x="592.4" y="166.9" width="42.7" height="3.7" fill="#0000ff" stroke="#000070" stroke-width="0.5"/><rect x="589.0" y="170.1" width="40.4" height="1.5" fill="#8a7a00" stroke="#5a5000" stroke-width="0.3"/><rect x="597.0" y="176.4" width="42.7" height="3.7" fill="#0000ff" stroke="#000070" stroke-width="0.5"/><rect x="593.6" y="179.6" width="42.7" height="1.5" fill="#8a7a00" stroke="#5a5000" stroke-width="0.3"/><rect x="621.3" y="185.3" width="28.8" height="3.7" fill="#0000ff" stroke="#000070" stroke-width="0.5"/><rect x="617.8" y="188.5" width="28.8" height="1.5" fill="#8a7a00" stroke="#5a5000" stroke-width="0.3"/><rect x="650.1" y="194.4" width="9.2" height="3.7" fill="#0000ff" stroke="#000070" stroke-width="0.5"/><rect x="646.6" y="197.6" width="9.2" height="1.5" fill="#8a7a00" stroke="#5a5000" stroke-width="0.3"/><rect x="654.7" y="204.1" width="9.2" height="3.7" fill="#0000ff" stroke="#000070" stroke-width="0.5"/><rect x="651.2" y="207.3" width="9.2" height="1.5" fill="#8a7a00" stroke="#5a5000" stroke-width="0.3"/><rect x="654.7" y="213.2" width="9.2" height="3.7" fill="#0000ff" stroke="#000070" stroke-width="0.5"/><rect x="651.2" y="216.4" width="9.2" height="1.5" fill="#8a7a00" stroke="#5a5000" stroke-width="0.3"/><rect x="654.7" y="223.2" width="9.2" height="3.7" fill="#0000ff" stroke="#000070" stroke-width="0.5"/><rect x="651.2" y="226.4" width="9.2" height="1.5" fill="#8a7a00" stroke="#5a5000" stroke-width="0.3"/><rect x="654.7" y="232.7" width="9.2" height="3.7" fill="#0000ff" stroke="#000070" stroke-width="0.5"/><rect x="651.2" y="235.9" width="9.2" height="1.5" fill="#8a7a00" stroke="#5a5000" stroke-width="0.3"/><rect x="654.7" y="242.2" width="9.2" height="3.7" fill="#0000ff" stroke="#000070" stroke-width="0.5"/><rect x="651.2" y="245.4" width="9.2" height="1.5" fill="#8a7a00" stroke="#5a5000" stroke-width="0.3"/><rect x="663.9" y="252.0" width="3.5" height="3.7" fill="#0000ff" stroke="#000070" stroke-width="0.5"/><rect x="660.5" y="255.2" width="3.5" height="1.5" fill="#8a7a00" stroke="#5a5000" stroke-width="0.3"/><rect x="666.2" y="261.5" width="5.8" height="3.7" fill="#0000ff" stroke="#000070" stroke-width="0.5"/><rect x="662.8" y="264.7" width="5.8" height="1.5" fill="#8a7a00" stroke="#5a5000" stroke-width="0.3"/><rect x="591.0" y="270.3" width="43.4" height="2.0" fill="#000"/><polygon points="591.0,272.0 594.8,272.0 592.9,274.4" fill="#000"/><polygon points="630.6,272.0 634.4,272.0 632.5,274.4" fill="#000"/><rect x="592.4" y="278.5" width="40.4" height="3.7" fill="#0000ff" stroke="#000070" stroke-width="0.5"/><rect x="589.0" y="281.7" width="40.4" height="1.5" fill="#8a7a00" stroke="#5a5000" stroke-width="0.3"/><rect x="662.5" y="288.0" width="11.1" height="2.0" fill="#000"/><polygon points="662.5,289.7 666.3,289.7 664.4,292.1" fill="#000"/><polygon points="669.8,289.7 673.6,289.7 671.7,292.1" fill="#000"/><rect x="663.9" y="296.9" width="8.1" height="3.7" fill="#0000ff" stroke="#000070" stroke-width="0.5"/><rect x="660.5" y="300.1" width="8.1" height="1.5" fill="#8a7a00" stroke="#5a5000" stroke-width="0.3"/><rect x="574.9" y="306.2" width="52.6" height="2.0" fill="#000"/><polygon points="574.9,307.9 578.7,307.9 576.8,310.3" fill="#000"/><polygon points="623.7,307.9 627.5,307.9 625.6,310.3" fill="#000"/><rect x="576.3" y="315.3" width="3.5" height="3.7" fill="#0000ff" stroke="#000070" stroke-width="0.5"/><rect x="576.3" y="318.5" width="3.5" height="1.5" fill="#8a7a00" stroke="#5a5000" stroke-width="0.3"/><rect x="579.8" y="324.4" width="2.3" height="3.7" fill="#0000ff" stroke="#000070" stroke-width="0.5"/><rect x="579.8" y="327.6" width="2.3" height="1.5" fill="#8a7a00" stroke="#5a5000" stroke-width="0.3"/><rect x="582.1" y="333.5" width="3.5" height="3.7" fill="#0000ff" stroke="#000070" stroke-width="0.5"/><rect x="582.1" y="336.7" width="3.5" height="1.5" fill="#8a7a00" stroke="#5a5000" stroke-width="0.3"/><rect x="585.5" y="343.0" width="8.1" height="3.7" fill="#0000ff" stroke="#000070" stroke-width="0.5"/><rect x="585.5" y="346.2" width="8.1" height="1.5" fill="#8a7a00" stroke="#5a5000" stroke-width="0.3"/><rect x="593.6" y="352.6" width="24.2" height="3.7" fill="#0000ff" stroke="#000070" stroke-width="0.5"/><rect x="593.6" y="355.8" width="24.2" height="1.5" fill="#8a7a00" stroke="#5a5000" stroke-width="0.3"/><rect x="617.8" y="361.7" width="8.1" height="3.7" fill="#0000ff" stroke="#000070" stroke-width="0.5"/><rect x="617.8" y="364.9" width="8.1" height="1.5" fill="#8a7a00" stroke="#5a5000" stroke-width="0.3"/><rect x="592.2" y="371.1" width="81.4" height="2.0" fill="#000"/><polygon points="592.2,372.8 596.0,372.8 594.1,375.2" fill="#000"/><polygon points="669.8,372.8 673.6,372.8 671.7,375.2" fill="#000"/><rect x="593.6" y="380.0" width="32.3" height="3.7" fill="#0000ff" stroke="#000070" stroke-width="0.5"/><rect x="593.6" y="383.2" width="3.5" height="1.5" fill="#8a7a00" stroke="#5a5000" stroke-width="0.3"/><rect x="625.9" y="388.8" width="2.3" height="3.7" fill="#0000ff" stroke="#000070" stroke-width="0.5"/><rect x="597.0" y="392.1" width="2.3" height="1.3" fill="#5a5000" stroke="#3a3400" stroke-width="0.3"/><rect x="628.2" y="398.1" width="3.5" height="3.7" fill="#0000ff" stroke="#000070" stroke-width="0.5"/><rect x="599.4" y="401.4" width="3.5" height="1.3" fill="#5a5000" stroke="#3a3400" stroke-width="0.3"/><rect x="631.6" y="407.9" width="8.1" height="3.7" fill="#0000ff" stroke="#000070" stroke-width="0.5"/><rect x="602.8" y="411.2" width="8.1" height="1.3" fill="#5a5000" stroke="#3a3400" stroke-width="0.3"/><rect x="639.7" y="417.1" width="24.2" height="3.7" fill="#0000ff" stroke="#000070" stroke-width="0.5"/><rect x="610.9" y="420.4" width="24.2" height="1.3" fill="#5a5000" stroke="#3a3400" stroke-width="0.3"/><rect x="663.9" y="426.8" width="8.1" height="3.7" fill="#0000ff" stroke="#000070" stroke-width="0.5"/><rect x="635.1" y="430.1" width="8.1" height="1.3" fill="#5a5000" stroke="#3a3400" stroke-width="0.3"/><rect x="670.6" y="436.2" width="12.2" height="2.0" fill="#000"/><polygon points="670.6,437.9 674.4,437.9 672.5,440.3" fill="#000"/><polygon points="679.0,437.9 682.8,437.9 680.9,440.3" fill="#000"/><rect x="672.0" y="445.1" width="1.2" height="3.7" fill="#0000ff" stroke="#000070" stroke-width="0.5"/><rect x="668.5" y="448.3" width="1.2" height="1.5" fill="#8a7a00" stroke="#5a5000" stroke-width="0.3"/><rect x="673.1" y="453.9" width="6.9" height="3.7" fill="#0000ff" stroke="#000070" stroke-width="0.5"/><rect x="669.7" y="457.1" width="6.9" height="1.5" fill="#8a7a00" stroke="#5a5000" stroke-width="0.3"/><rect x="680.1" y="463.2" width="1.2" height="3.7" fill="#0000ff" stroke="#000070" stroke-width="0.5"/><rect x="676.6" y="466.4" width="1.2" height="1.5" fill="#8a7a00" stroke="#5a5000" stroke-width="0.3"/><polygon points="540.0,41.3 541.7,43.0 540.0,44.7 538.3,43.0" fill="#000" stroke="#000" stroke-width="0.4"/><polygon points="540.0,44.9 541.7,46.6 540.0,48.3 538.3,46.6" fill="#f0e000" stroke="#707000" stroke-width="0.4"/><polygon points="573.8,50.7 575.5,52.4 573.8,54.1 572.1,52.4" fill="#000" stroke="#000" stroke-width="0.4"/><polygon points="573.8,54.3 575.5,56.0 573.8,57.7 572.1,56.0" fill="#f0e000" stroke="#707000" stroke-width="0.4"/><polygon points="680.4,60.5 682.1,62.2 680.4,63.9 678.7,62.2" fill="#000" stroke="#000" stroke-width="0.4"/><polygon points="677.2,63.9 678.9,65.6 677.2,67.3 675.5,65.6" fill="#f0e000" stroke="#707000" stroke-width="0.4"/><polyline points="540.0,48.4 540.0,50.7" fill="none" stroke="#3c3c3c" stroke-width="0.9"/><polyline points="533.3,50.7 563.5,50.7" fill="none" stroke="#3c3c3c" stroke-width="0.9"/><polyline points="533.3,50.7 533.3,122.4" fill="none" stroke="#3c3c3c" stroke-width="0.9"/><polyline points="533.3,112.9 539.4,112.9" fill="none" stroke="#3c3c3c" stroke-width="0.9"/><polygon points="539.4,112.9 536.2,111.3 536.2,114.5" fill="#000"/><polyline points="533.3,122.4 539.4,122.4" fill="none" stroke="#3c3c3c" stroke-width="0.9"/><polygon points="539.4,122.4 536.2,120.8 536.2,124.0" fill="#000"/><polyline points="550.2,50.7 550.2,83.9 555.5,83.9" fill="none" stroke="#3c3c3c" stroke-width="0.9"/><polygon points="555.5,83.9 552.3,82.3 552.3,85.5" fill="#000"/><polyline points="563.5,50.7 563.5,93.4 569.4,93.4" fill="none" stroke="#3c3c3c" stroke-width="0.9"/><polygon points="569.4,93.4 566.2,91.8 566.2,95.0" fill="#000"/><polyline points="574.3,122.9 574.3,124.0 567.1,124.0 567.1,55.9 571.6,55.9" fill="none" stroke="#3c3c3c" stroke-width="0.9"/><polygon points="571.6,55.9 568.4,54.3 568.4,57.5" fill="#000"/><polyline points="558.1,83.9 558.1,85.6 568.3,85.6 568.3,141.8 574.0,141.8" fill="none" stroke="#3c3c3c" stroke-width="0.9"/><polygon points="574.0,141.8 570.8,140.2 570.8,143.4" fill="#000"/><polyline points="551.0,110.6 568.3,110.6" fill="none" stroke="#3c3c3c" stroke-width="0.9"/><polyline points="551.2,112.9 551.2,114.8 568.3,114.8" fill="none" stroke="#3c3c3c" stroke-width="0.9"/><polyline points="574.3,93.4 574.3,94.9 578.3,94.9 578.3,160.9 584.4,160.9" fill="none" stroke="#3c3c3c" stroke-width="0.9"/><polygon points="584.4,160.9 581.2,159.3 581.2,162.5" fill="#000"/><polyline points="576.6,141.8 576.6,143.4 570.5,143.4 570.5,319.2 576.3,319.2" fill="none" stroke="#3c3c3c" stroke-width="0.9"/><polygon points="576.3,319.2 573.1,317.6 573.1,320.8" fill="#000"/><polyline points="570.5,151.6 576.3,151.6" fill="none" stroke="#3c3c3c" stroke-width="0.9"/><polygon points="576.3,151.6 573.1,150.0 573.1,153.2" fill="#000"/><polyline points="584.7,151.6 584.7,152.9 578.3,152.9 578.3,160.9 584.4,160.9" fill="none" stroke="#3c3c3c" stroke-width="0.9"/><polygon points="584.4,160.9 581.2,159.3 581.2,162.5" fill="#000"/><polyline points="589.3,160.9 589.3,162.7 583.2,162.7 583.2,282.4 589.0,282.4" fill="none" stroke="#3c3c3c" stroke-width="0.9"/><polygon points="589.0,282.4 585.8,280.8 585.8,284.0" fill="#000"/><polyline points="583.2,170.8 589.0,170.8" fill="none" stroke="#3c3c3c" stroke-width="0.9"/><polygon points="589.0,170.8 585.8,169.2 585.8,172.4" fill="#000"/><polyline points="588.5,172.0 587.9,172.0 587.9,180.3 593.6,180.3" fill="none" stroke="#3c3c3c" stroke-width="0.9"/><polygon points="593.6,180.3 590.4,178.7 590.4,181.9" fill="#000"/><polyline points="636.6,180.3 636.6,182.3 652.4,182.3 652.4,188.7 650.3,188.7" fill="none" stroke="#3c3c3c" stroke-width="0.9"/><polygon points="650.3,188.7 653.5,187.1 653.5,190.3" fill="#000"/><polyline points="646.9,189.2 646.9,190.5 640.6,190.5 640.6,198.3 646.6,198.3" fill="none" stroke="#3c3c3c" stroke-width="0.9"/><polygon points="646.6,198.3 643.4,196.7 643.4,199.9" fill="#000"/><polyline points="646.9,199.6 644.7,199.6 644.7,208.0 651.2,208.0" fill="none" stroke="#3c3c3c" stroke-width="0.9"/><polygon points="651.2,208.0 648.0,206.4 648.0,209.6" fill="#000"/><polyline points="651.5,209.3 644.7,209.3 644.7,217.1 651.2,217.1" fill="none" stroke="#3c3c3c" stroke-width="0.9"/><polygon points="651.2,217.1 648.0,215.5 648.0,218.7" fill="#000"/><polyline points="651.5,218.4 644.7,218.4 644.7,227.1 651.2,227.1" fill="none" stroke="#3c3c3c" stroke-width="0.9"/><polygon points="651.2,227.1 648.0,225.5 648.0,228.7" fill="#000"/><polyline points="651.5,228.4 644.7,228.4 644.7,236.6 651.2,236.6" fill="none" stroke="#3c3c3c" stroke-width="0.9"/><polygon points="651.2,236.6 648.0,235.0 648.0,238.2" fill="#000"/><polyline points="651.5,237.9 644.7,237.9 644.7,246.1 651.2,246.1" fill="none" stroke="#3c3c3c" stroke-width="0.9"/><polygon points="651.2,246.1 648.0,244.5 648.0,247.7" fill="#000"/><polyline points="660.8,246.1 660.8,247.4 654.5,247.4 654.5,335.3" fill="none" stroke="#3c3c3c" stroke-width="0.9"/><polyline points="654.5,255.9 660.5,255.9" fill="none" stroke="#3c3c3c" stroke-width="0.9"/><polygon points="660.5,255.9 657.3,254.3 657.3,257.5" fill="#000"/><polyline points="654.5,300.8 660.5,300.8" fill="none" stroke="#3c3c3c" stroke-width="0.9"/><polygon points="660.5,300.8 657.3,299.2 657.3,302.4" fill="#000"/><polyline points="585.8,335.3 654.5,335.3" fill="none" stroke="#3c3c3c" stroke-width="0.9"/><polyline points="664.2,255.9 664.2,257.2 656.8,257.2 656.8,265.4 662.8,265.4" fill="none" stroke="#3c3c3c" stroke-width="0.9"/><polygon points="662.8,265.4 659.6,263.8 659.6,267.0" fill="#000"/><polyline points="632.8,284.8 674.3,284.8 674.3,300.2 672.0,300.2" fill="none" stroke="#3c3c3c" stroke-width="0.9"/><polygon points="672.0,300.2 675.2,298.6 675.2,301.8" fill="#000"/><polyline points="668.8,300.8 668.8,302.1 662.8,302.1 662.8,449.0 668.5,449.0" fill="none" stroke="#3c3c3c" stroke-width="0.9"/><polygon points="668.5,449.0 665.3,447.4 665.3,450.6" fill="#000"/><polyline points="626.2,365.6 626.2,368.2 662.8,368.2" fill="none" stroke="#3c3c3c" stroke-width="0.9"/><polyline points="580.1,319.2 580.1,320.5 573.8,320.5 573.8,328.3 579.8,328.3" fill="none" stroke="#3c3c3c" stroke-width="0.9"/><polygon points="579.8,328.3 576.6,326.7 576.6,329.9" fill="#000"/><polyline points="582.4,328.3 582.4,329.6 576.1,329.6 576.1,337.4 582.1,337.4" fill="none" stroke="#3c3c3c" stroke-width="0.9"/><polygon points="582.1,337.4 578.9,335.8 578.9,339.0" fill="#000"/><polyline points="585.8,337.4 585.8,338.7 579.5,338.7 579.5,346.9 585.5,346.9" fill="none" stroke="#3c3c3c" stroke-width="0.9"/><polygon points="585.5,346.9 582.3,345.3 582.3,348.5" fill="#000"/><polyline points="593.9,346.9 593.9,348.2 587.6,348.2 587.6,383.9 593.6,383.9" fill="none" stroke="#3c3c3c" stroke-width="0.9"/><polygon points="593.6,383.9 590.4,382.3 590.4,385.5" fill="#000"/><polyline points="587.6,356.5 593.6,356.5" fill="none" stroke="#3c3c3c" stroke-width="0.9"/><polygon points="593.6,356.5 590.4,354.9 590.4,358.1" fill="#000"/><polyline points="618.1,356.5 618.1,357.8 611.8,357.8 611.8,365.6 617.8,365.6" fill="none" stroke="#3c3c3c" stroke-width="0.9"/><polygon points="617.8,365.6 614.6,364.0 614.6,367.2" fill="#000"/><polyline points="597.3,383.9 597.3,385.2 591.0,385.2 591.0,392.7 597.0,392.7" fill="none" stroke="#3c3c3c" stroke-width="0.9"/><polygon points="597.0,392.7 593.8,391.1 593.8,394.3" fill="#000"/><polyline points="599.7,392.7 599.7,394.0 593.4,394.0 593.4,402.0 599.4,402.0" fill="none" stroke="#3c3c3c" stroke-width="0.9"/><polygon points="599.4,402.0 596.2,400.4 596.2,403.6" fill="#000"/><polyline points="603.1,402.0 603.1,403.3 596.8,403.3 596.8,411.8 602.8,411.8" fill="none" stroke="#3c3c3c" stroke-width="0.9"/><polygon points="602.8,411.8 599.6,410.2 599.6,413.4" fill="#000"/><polyline points="611.2,411.8 611.2,413.1 604.9,413.1 604.9,421.0 610.9,421.0" fill="none" stroke="#3c3c3c" stroke-width="0.9"/><polygon points="610.9,421.0 607.7,419.4 607.7,422.6" fill="#000"/><polyline points="635.4,421.0 635.4,422.3 629.1,422.3 629.1,430.7 635.1,430.7" fill="none" stroke="#3c3c3c" stroke-width="0.9"/><polygon points="635.1,430.7 631.9,429.1 631.9,432.3" fill="#000"/><polyline points="643.5,430.7 643.5,432.2 662.8,432.2" fill="none" stroke="#3c3c3c" stroke-width="0.9"/><polyline points="670.0,449.0 670.0,450.3 663.7,450.3 663.7,457.8 669.7,457.8" fill="none" stroke="#3c3c3c" stroke-width="0.9"/><polygon points="669.7,457.8 666.5,456.2 666.5,459.4" fill="#000"/><polyline points="676.9,457.8 676.9,459.1 670.6,459.1 670.6,467.1 676.6,467.1" fill="none" stroke="#3c3c3c" stroke-width="0.9"/><polygon points="676.6,467.1 673.4,465.5 673.4,468.7" fill="#000"/><polyline points="678.1,467.1 678.1,468.6 671.2,468.6 671.2,64.8 675.0,64.8" fill="none" stroke="#3c3c3c" stroke-width="0.9"/><polygon points="675.0,64.8 671.8,63.2 671.8,66.4" fill="#000"/></svg><div class="a" style="left:8.8px;top:470.70px;width:495.7px;height:1px;background:#dcdcdc"></div>
<div class="a" style="left:8.8px;top:461.50px;width:495.7px;height:1px;background:#dcdcdc"></div>
<div class="a" style="left:8.8px;top:452.20px;width:495.7px;height:1px;background:#dcdcdc"></div>
<div class="a" style="left:8.8px;top:425.10px;width:495.7px;height:1px;background:#dcdcdc"></div>
<div class="a" style="left:8.8px;top:415.40px;width:495.7px;height:1px;background:#dcdcdc"></div>
<div class="a" style="left:8.8px;top:406.20px;width:495.7px;height:1px;background:#dcdcdc"></div>
<div class="a" style="left:8.8px;top:396.40px;width:495.7px;height:1px;background:#dcdcdc"></div>
<div class="a" style="left:8.8px;top:387.10px;width:495.7px;height:1px;background:#dcdcdc"></div>
<div class="a" style="left:8.8px;top:360.00px;width:495.7px;height:1px;background:#dcdcdc"></div>
<div class="a" style="left:8.8px;top:350.90px;width:495.7px;height:1px;background:#dcdcdc"></div>
<div class="a" style="left:8.8px;top:341.30px;width:495.7px;height:1px;background:#dcdcdc"></div>
<div class="a" style="left:8.8px;top:331.80px;width:495.7px;height:1px;background:#dcdcdc"></div>
<div class="a" style="left:8.8px;top:322.70px;width:495.7px;height:1px;background:#dcdcdc"></div>
<div class="a" style="left:6.0px;top:259.80px;width:498.5px;height:1px;background:#dcdcdc"></div>
<div class="a" style="left:6.0px;top:250.30px;width:498.5px;height:1px;background:#dcdcdc"></div>
<div class="a" style="left:6.0px;top:240.50px;width:498.5px;height:1px;background:#dcdcdc"></div>
<div class="a" style="left:6.0px;top:231.00px;width:498.5px;height:1px;background:#dcdcdc"></div>
<div class="a" style="left:6.0px;top:221.50px;width:498.5px;height:1px;background:#dcdcdc"></div>
<div class="a" style="left:6.0px;top:211.50px;width:498.5px;height:1px;background:#dcdcdc"></div>
<div class="a" style="left:6.0px;top:202.40px;width:498.5px;height:1px;background:#dcdcdc"></div>
<div class="a" style="left:6.0px;top:192.70px;width:498.5px;height:1px;background:#dcdcdc"></div>
<div class="a" style="left:6.0px;top:183.60px;width:498.5px;height:1px;background:#dcdcdc"></div>
<div class="a" style="left:6.0px;top:174.70px;width:498.5px;height:1px;background:#dcdcdc"></div>
<div class="a" style="left:6.0px;top:165.20px;width:498.5px;height:1px;background:#dcdcdc"></div>
<div class="a" style="left:6.0px;top:155.30px;width:498.5px;height:1px;background:#dcdcdc"></div>
<div class="a" style="left:6.0px;top:146.00px;width:498.5px;height:1px;background:#dcdcdc"></div>
<div class="a" style="left:6.0px;top:116.80px;width:498.5px;height:1px;background:#dcdcdc"></div>
<div class="a" style="left:6.0px;top:87.80px;width:498.5px;height:1px;background:#dcdcdc"></div>
<div class="a" style="left:6.0px;top:58.80px;width:498.5px;height:1px;background:#dcdcdc"></div>
<div class="a" style="left:6.0px;top:49.20px;width:498.5px;height:1px;background:#dcdcdc"></div>
<div class="hd" style="left:3.3px;top:2.6px">作业代码</div>
<div class="hd" style="left:73.5px;top:2.6px">作业名称</div>
<div class="hd" style="left:206.3px;top:2.6px">原定工期</div>
<div class="hd" style="left:234px;top:2.6px">尚需工期</div>
<div class="hd" style="left:280px;top:2.6px">开始</div>
<div class="hd" style="left:331px;top:2.6px">完成</div>
<div class="hd" style="left:376.5px;top:2.6px">基线开始</div>
<div class="hd" style="left:423.5px;top:2.6px">基线完成</div>
<div class="hd" style="left:458px;width:46px;text-align:center;top:2.6px">差值 - 基线项目</div>
<div class="hd" style="left:458px;width:46px;text-align:center;top:9.6px">完成日期</div>
<svg class="a" style="left:8.5px;top:21px" width="8" height="7" viewBox="0 0 8 7"><path d="M0.5,1.2 h2.6 l0.8,0.9 h3.4 v4.4 h-6.8 z" fill="#c8d8e4" stroke="#e8f0f4" stroke-width="0.5"/><path d="M0.5,3 h6.8 v3.5 h-6.8z" fill="#dfe8ee"/></svg>
<div class="t" style="left:18.5px;top:18.1px;font-size:8.6px;line-height:12px;font-weight:bold;color:#f0f000"><i style="font-size:8.6px">管</i><i style="font-size:8.6px">道</i><i style="font-size:8.6px">工</i><i style="font-size:8.6px">程</i><i style="font-size:8.6px">项</i><i style="font-size:8.6px">目</i></div>
<div class="t" style="left:203.6px;width:27px;text-align:center;top:19.2px;color:#e8e800">123</div>
<div class="t" style="left:232px;width:27px;text-align:center;top:19.2px;color:#e8e800">0</div>
<div class="t" style="left:250px;width:58px;text-align:right;top:19.2px;color:#e8e800">01<em>-</em><i>一</i><i>月</i><em>-</em>19</div>
<div class="t" style="left:300px;width:60.30000000000001px;text-align:right;top:19.2px;color:#e8e800">03<em>-</em><i>五</i><i>月</i><em>-</em>19<em class="sp"> </em>A</div>
<div class="t" style="left:350px;width:56.5px;text-align:right;top:19.2px;color:#e8e800">01<em>-</em><i>一</i><i>月</i><em>-</em>19</div>
<div class="t" style="left:400px;width:53.5px;text-align:right;top:19.2px;color:#e8e800">30<em>-</em><i>四</i><i>月</i><em>-</em>19</div>
<div class="t" style="left:457.2px;width:47px;text-align:center;top:19.2px;color:#e8e800">-3</div>
<div class="wi" style="left:11.4px;top:32.6px"></div><div class="wi" style="left:13.4px;top:34.5px"></div>
<div class="t" style="left:22px;top:29.9px;font-weight:bold;color:#000;letter-spacing:0"><i style="font-size:7.0px">里</i><i style="font-size:7.0px">程</i><i style="font-size:7.0px">碑</i></div>
<div class="t" style="left:203.6px;width:27px;text-align:center;top:29.9px;color:#101010">123</div>
<div class="t" style="left:232px;width:27px;text-align:center;top:29.9px;color:#101010">0</div>
<div class="t" style="left:250px;width:58px;text-align:right;top:29.9px;color:#101010">01<em>-</em><i>一</i><i>月</i><em>-</em>19</div>
<div class="t" style="left:300px;width:60.30000000000001px;text-align:right;top:29.9px;color:#101010">03<em>-</em><i>五</i><i>月</i><em>-</em>19<em class="sp"> </em>A</div>
<div class="t" style="left:350px;width:56.5px;text-align:right;top:29.9px;color:#101010">01<em>-</em><i>一</i><i>月</i><em>-</em>19</div>
<div class="t" style="left:400px;width:53.5px;text-align:right;top:29.9px;color:#101010">30<em>-</em><i>四</i><i>月</i><em>-</em>19</div>
<div class="t" style="left:457.2px;width:47px;text-align:center;top:29.9px;color:#101010">-3</div>
<div class="ic" style="left:13.0px;top:43.1px"></div>
<div class="t" style="left:23.7px;top:40.8px;">MS-1000</div>
<div class="t" style="left:73px;top:40.8px;letter-spacing:0"><i style="font-size:7.8px">签</i><i style="font-size:7.8px">订</i><i style="font-size:7.8px">合</i><i style="font-size:7.8px">同</i></div>
<div class="t" style="left:203.6px;width:27px;text-align:center;top:40.8px;color:#2a2a2a">0</div>
<div class="t" style="left:232px;width:27px;text-align:center;top:40.8px;color:#2a2a2a">0</div>
<div class="t" style="left:250px;width:58px;text-align:right;top:40.8px;color:#2a2a2a">01<em>-</em><i>一</i><i>月</i><em>-</em>19</div>
<div class="t" style="left:350px;width:56.5px;text-align:right;top:40.8px;color:#2a2a2a">01<em>-</em><i>一</i><i>月</i><em>-</em>19</div>
<div class="t" style="left:457.2px;width:47px;text-align:center;top:40.8px;color:#2a2a2a">0</div>
<div class="ic" style="left:13.0px;top:52.4px"></div>
<div class="t" style="left:23.7px;top:50.3px;">MS-1010</div>
<div class="t" style="left:73px;top:50.3px;letter-spacing:0"><i style="font-size:7.8px">完</i><i style="font-size:7.8px">成</i><i style="font-size:7.8px">动</i><i style="font-size:7.8px">迁</i></div>
<div class="t" style="left:203.6px;width:27px;text-align:center;top:50.3px;color:#2a2a2a">0</div>
<div class="t" style="left:232px;width:27px;text-align:center;top:50.3px;color:#2a2a2a">0</div>
<div class="t" style="left:300px;width:60.30000000000001px;text-align:right;top:50.3px;color:#2a2a2a">30<em>-</em><i>一</i><i>月</i><em>-</em>19<em class="sp"> </em>A</div>
<div class="t" style="left:400px;width:53.5px;text-align:right;top:50.3px;color:#2a2a2a">30<em>-</em><i>一</i><i>月</i><em>-</em>19</div>
<div class="t" style="left:457.2px;width:47px;text-align:center;top:50.3px;color:#2a2a2a">0</div>
<div class="ic" style="left:13.0px;top:62.0px"></div>
<div class="t" style="left:23.7px;top:59.7px;">MS-1020</div>
<div class="t" style="left:73px;top:59.7px;letter-spacing:0"><i style="font-size:7.8px">竣</i><i style="font-size:7.8px">工</i><i style="font-size:7.8px">验</i><i style="font-size:7.8px">收</i></div>
<div class="t" style="left:203.6px;width:27px;text-align:center;top:59.7px;color:#2a2a2a">0</div>
<div class="t" style="left:232px;width:27px;text-align:center;top:59.7px;color:#2a2a2a">0</div>
<div class="t" style="left:300px;width:60.30000000000001px;text-align:right;top:59.7px;color:#2a2a2a">03<em>-</em><i>五</i><i>月</i><em>-</em>19<em class="sp"> </em>A</div>
<div class="t" style="left:400px;width:53.5px;text-align:right;top:59.7px;color:#2a2a2a">30<em>-</em><i>四</i><i>月</i><em>-</em>19</div>
<div class="t" style="left:457.2px;width:47px;text-align:center;top:59.7px;color:#2a2a2a">-3</div>
<div class="wi" style="left:11.4px;top:71.8px"></div><div class="wi" style="left:13.4px;top:73.7px"></div>
<div class="t" style="left:22px;top:68.7px;font-weight:bold;color:#000;letter-spacing:0"><i style="font-size:7.0px">业</i><i style="font-size:7.0px">主</i><i style="font-size:7.0px">图</i><i style="font-size:7.0px">纸</i><i style="font-size:7.0px">及</i><i style="font-size:7.0px">材</i><i style="font-size:7.0px">料</i></div>
<div class="t" style="left:203.6px;width:27px;text-align:center;top:68.7px;color:#101010">12</div>
<div class="t" style="left:232px;width:27px;text-align:center;top:68.7px;color:#101010">0</div>
<div class="t" style="left:250px;width:58px;text-align:right;top:68.7px;color:#101010">15<em>-</em><i>一</i><i>月</i><em>-</em>19</div>
<div class="t" style="left:300px;width:60.30000000000001px;text-align:right;top:68.7px;color:#101010">05<em>-</em><i>二</i><i>月</i><em>-</em>19<em class="sp"> </em>A</div>
<div class="t" style="left:350px;width:56.5px;text-align:right;top:68.7px;color:#101010">15<em>-</em><i>一</i><i>月</i><em>-</em>19</div>
<div class="t" style="left:400px;width:53.5px;text-align:right;top:68.7px;color:#101010">30<em>-</em><i>一</i><i>月</i><em>-</em>19</div>
<div class="t" style="left:457.2px;width:47px;text-align:center;top:68.7px;color:#101010">-6</div>
<div class="ic" style="left:13.0px;top:81.5px"></div>
<div class="t" style="left:23.7px;top:79.3px;">OW-1000</div>
<div class="t" style="left:73px;top:79.3px;letter-spacing:0"><i style="font-size:7.8px">施</i><i style="font-size:7.8px">工</i><i style="font-size:7.8px">图</i><i style="font-size:7.8px">纸</i><i style="font-size:7.8px">包</i></div>
<div class="t" style="left:203.6px;width:27px;text-align:center;top:79.3px;color:#2a2a2a">2</div>
<div class="t" style="left:232px;width:27px;text-align:center;top:79.3px;color:#2a2a2a">0</div>
<div class="t" style="left:250px;width:58px;text-align:right;top:79.3px;color:#2a2a2a">15<em>-</em><i>一</i><i>月</i><em>-</em>19</div>
<div class="t" style="left:300px;width:60.30000000000001px;text-align:right;top:79.3px;color:#2a2a2a">16<em>-</em><i>一</i><i>月</i><em>-</em>19<em class="sp"> </em>A</div>
<div class="t" style="left:350px;width:56.5px;text-align:right;top:79.3px;color:#2a2a2a">15<em>-</em><i>一</i><i>月</i><em>-</em>19</div>
<div class="t" style="left:400px;width:53.5px;text-align:right;top:79.3px;color:#2a2a2a">16<em>-</em><i>一</i><i>月</i><em>-</em>19</div>
<div class="t" style="left:457.2px;width:47px;text-align:center;top:79.3px;color:#2a2a2a">0</div>
<div class="ic" style="left:13.0px;top:91.0px"></div>
<div class="t" style="left:23.7px;top:88.8px;">OW-1010</div>
<div class="t" style="left:73px;top:88.8px;letter-spacing:0"><i style="font-size:7.8px">管</i><i style="font-size:7.8px">材</i><i style="font-size:7.8px">、</i><i style="font-size:7.8px">弯</i><i style="font-size:7.8px">头</i><i style="font-size:7.8px">及</i><i style="font-size:7.8px">锚</i><i style="font-size:7.8px">固</i><i style="font-size:7.8px">法</i><i style="font-size:7.8px">兰</i></div>
<div class="t" style="left:203.6px;width:27px;text-align:center;top:88.8px;color:#2a2a2a">4</div>
<div class="t" style="left:232px;width:27px;text-align:center;top:88.8px;color:#2a2a2a">0</div>
<div class="t" style="left:250px;width:58px;text-align:right;top:88.8px;color:#2a2a2a">02<em>-</em><i>二</i><i>月</i><em>-</em>19</div>
<div class="t" style="left:300px;width:60.30000000000001px;text-align:right;top:88.8px;color:#2a2a2a">05<em>-</em><i>二</i><i>月</i><em>-</em>19<em class="sp"> </em>A</div>
<div class="t" style="left:350px;width:56.5px;text-align:right;top:88.8px;color:#2a2a2a">27<em>-</em><i>一</i><i>月</i><em>-</em>19</div>
<div class="t" style="left:400px;width:53.5px;text-align:right;top:88.8px;color:#2a2a2a">30<em>-</em><i>一</i><i>月</i><em>-</em>19</div>
<div class="t" style="left:457.2px;width:47px;text-align:center;top:88.8px;color:#2a2a2a">-6</div>
<div class="wi" style="left:11.4px;top:101.0px"></div><div class="wi" style="left:13.4px;top:102.9px"></div>
<div class="t" style="left:22px;top:97.8px;font-weight:bold;color:#000;letter-spacing:0"><i style="font-size:7.0px">承</i><i style="font-size:7.0px">包</i><i style="font-size:7.0px">商</i><i style="font-size:7.0px">动</i><i style="font-size:7.0px">迁</i></div>
<div class="t" style="left:203.6px;width:27px;text-align:center;top:97.8px;color:#101010">30</div>
<div class="t" style="left:232px;width:27px;text-align:center;top:97.8px;color:#101010">0</div>
<div class="t" style="left:250px;width:58px;text-align:right;top:97.8px;color:#101010">01<em>-</em><i>一</i><i>月</i><em>-</em>19</div>
<div class="t" style="left:300px;width:60.30000000000001px;text-align:right;top:97.8px;color:#101010">30<em>-</em><i>一</i><i>月</i><em>-</em>19<em class="sp"> </em>A</div>
<div class="t" style="left:350px;width:56.5px;text-align:right;top:97.8px;color:#101010">01<em>-</em><i>一</i><i>月</i><em>-</em>19</div>
<div class="t" style="left:400px;width:53.5px;text-align:right;top:97.8px;color:#101010">30<em>-</em><i>一</i><i>月</i><em>-</em>19</div>
<div class="t" style="left:457.2px;width:47px;text-align:center;top:97.8px;color:#101010">0</div>
<div class="ic" style="left:13.0px;top:110.5px"></div>
<div class="t" style="left:23.7px;top:108.3px;">CT-1000</div>
<div class="t" style="left:73px;top:108.3px;letter-spacing:0"><i style="font-size:7.8px">关</i><i style="font-size:7.8px">键</i><i style="font-size:7.8px">人</i><i style="font-size:7.8px">员</i><i style="font-size:7.8px">动</i><i style="font-size:7.8px">迁</i></div>
<div class="t" style="left:203.6px;width:27px;text-align:center;top:108.3px;color:#2a2a2a">10</div>
<div class="t" style="left:232px;width:27px;text-align:center;top:108.3px;color:#2a2a2a">0</div>
<div class="t" style="left:250px;width:58px;text-align:right;top:108.3px;color:#2a2a2a">01<em>-</em><i>一</i><i>月</i><em>-</em>19</div>
<div class="t" style="left:300px;width:60.30000000000001px;text-align:right;top:108.3px;color:#2a2a2a">10<em>-</em><i>一</i><i>月</i><em>-</em>19<em class="sp"> </em>A</div>
<div class="t" style="left:350px;width:56.5px;text-align:right;top:108.3px;color:#2a2a2a">01<em>-</em><i>一</i><i>月</i><em>-</em>19</div>
<div class="t" style="left:400px;width:53.5px;text-align:right;top:108.3px;color:#2a2a2a">10<em>-</em><i>一</i><i>月</i><em>-</em>19</div>
<div class="t" style="left:457.2px;width:47px;text-align:center;top:108.3px;color:#2a2a2a">0</div>
<div class="ic" style="left:13.0px;top:120.0px"></div>
<div class="t" style="left:23.7px;top:117.7px;">CT-1010</div>
<div class="t" style="left:73px;top:117.7px;letter-spacing:0"><i style="font-size:7.8px">施</i><i style="font-size:7.8px">工</i><i style="font-size:7.8px">人</i><i style="font-size:7.8px">员</i><i style="font-size:7.8px">及</i><i style="font-size:7.8px">设</i><i style="font-size:7.8px">备</i><i style="font-size:7.8px">动</i><i style="font-size:7.8px">迁</i></div>
<div class="t" style="left:203.6px;width:27px;text-align:center;top:117.7px;color:#2a2a2a">30</div>
<div class="t" style="left:232px;width:27px;text-align:center;top:117.7px;color:#2a2a2a">0</div>
<div class="t" style="left:250px;width:58px;text-align:right;top:117.7px;color:#2a2a2a">01<em>-</em><i>一</i><i>月</i><em>-</em>19</div>
<div class="t" style="left:300px;width:60.30000000000001px;text-align:right;top:117.7px;color:#2a2a2a">30<em>-</em><i>一</i><i>月</i><em>-</em>19<em class="sp"> </em>A</div>
<div class="t" style="left:350px;width:56.5px;text-align:right;top:117.7px;color:#2a2a2a">01<em>-</em><i>一</i><i>月</i><em>-</em>19</div>
<div class="t" style="left:400px;width:53.5px;text-align:right;top:117.7px;color:#2a2a2a">30<em>-</em><i>一</i><i>月</i><em>-</em>19</div>
<div class="t" style="left:457.2px;width:47px;text-align:center;top:117.7px;color:#2a2a2a">0</div>
<div class="wi" style="left:11.4px;top:129.8px"></div><div class="wi" style="left:13.4px;top:131.7px"></div>
<div class="t" style="left:22px;top:126.6px;font-weight:bold;color:#000;letter-spacing:0"><i style="font-size:7.0px">线</i><i style="font-size:7.0px">路</i><i style="font-size:7.0px">施</i><i style="font-size:7.0px">工</i></div>
<div class="t" style="left:203.6px;width:27px;text-align:center;top:126.6px;color:#101010">93</div>
<div class="t" style="left:232px;width:27px;text-align:center;top:126.6px;color:#101010">0</div>
<div class="t" style="left:250px;width:58px;text-align:right;top:126.6px;color:#101010">31<em>-</em><i>一</i><i>月</i><em>-</em>19</div>
<div class="t" style="left:300px;width:60.30000000000001px;text-align:right;top:126.6px;color:#101010">03<em>-</em><i>五</i><i>月</i><em>-</em>19<em class="sp"> </em>A</div>
<div class="t" style="left:350px;width:56.5px;text-align:right;top:126.6px;color:#101010">31<em>-</em><i>一</i><i>月</i><em>-</em>19</div>
<div class="t" style="left:400px;width:53.5px;text-align:right;top:126.6px;color:#101010">30<em>-</em><i>四</i><i>月</i><em>-</em>19</div>
<div class="t" style="left:457.2px;width:47px;text-align:center;top:126.6px;color:#101010">-3</div>
<div class="ic" style="left:13.0px;top:139.4px"></div>
<div class="t" style="left:23.7px;top:137.4px;">CT-1060</div>
<div class="t" style="left:73px;top:137.4px;letter-spacing:0"><i style="font-size:7.8px">测</i><i style="font-size:7.8px">量</i><i style="font-size:7.8px">防</i><i style="font-size:7.8px">线</i></div>
<div class="t" style="left:203.6px;width:27px;text-align:center;top:137.4px;color:#2a2a2a">2</div>
<div class="t" style="left:232px;width:27px;text-align:center;top:137.4px;color:#2a2a2a">0</div>
<div class="t" style="left:250px;width:58px;text-align:right;top:137.4px;color:#2a2a2a">31<em>-</em><i>一</i><i>月</i><em>-</em>19</div>
<div class="t" style="left:300px;width:60.30000000000001px;text-align:right;top:137.4px;color:#2a2a2a">01<em>-</em><i>二</i><i>月</i><em>-</em>19<em class="sp"> </em>A</div>
<div class="t" style="left:350px;width:56.5px;text-align:right;top:137.4px;color:#2a2a2a">31<em>-</em><i>一</i><i>月</i><em>-</em>19</div>
<div class="t" style="left:400px;width:53.5px;text-align:right;top:137.4px;color:#2a2a2a">01<em>-</em><i>二</i><i>月</i><em>-</em>19</div>
<div class="t" style="left:457.2px;width:47px;text-align:center;top:137.4px;color:#2a2a2a">0</div>
<div class="ic" style="left:13.0px;top:149.2px"></div>
<div class="t" style="left:23.7px;top:147.0px;">CT-1070</div>
<div class="t" style="left:73px;top:147.0px;letter-spacing:0"><i style="font-size:7.8px">作</i><i style="font-size:7.8px">业</i><i style="font-size:7.8px">带</i><i style="font-size:7.8px">清</i><i style="font-size:7.8px">理</i></div>
<div class="t" style="left:203.6px;width:27px;text-align:center;top:147.0px;color:#2a2a2a">7</div>
<div class="t" style="left:232px;width:27px;text-align:center;top:147.0px;color:#2a2a2a">0</div>
<div class="t" style="left:250px;width:58px;text-align:right;top:147.0px;color:#2a2a2a">05<em>-</em><i>二</i><i>月</i><em>-</em>19</div>
<div class="t" style="left:300px;width:60.30000000000001px;text-align:right;top:147.0px;color:#2a2a2a">11<em>-</em><i>二</i><i>月</i><em>-</em>19<em class="sp"> </em>A</div>
<div class="t" style="left:350px;width:56.5px;text-align:right;top:147.0px;color:#2a2a2a">02<em>-</em><i>二</i><i>月</i><em>-</em>19</div>
<div class="t" style="left:400px;width:53.5px;text-align:right;top:147.0px;color:#2a2a2a">08<em>-</em><i>二</i><i>月</i><em>-</em>19</div>
<div class="t" style="left:457.2px;width:47px;text-align:center;top:147.0px;color:#2a2a2a">-3</div>
<div class="ic" style="left:13.0px;top:158.5px"></div>
<div class="t" style="left:23.7px;top:156.6px;">CT-1080</div>
<div class="t" style="left:73px;top:156.6px;letter-spacing:0"><i style="font-size:7.8px">钢</i><i style="font-size:7.8px">管</i><i style="font-size:7.8px">运</i><i style="font-size:7.8px">输</i></div>
<div class="t" style="left:203.6px;width:27px;text-align:center;top:156.6px;color:#2a2a2a">4</div>
<div class="t" style="left:232px;width:27px;text-align:center;top:156.6px;color:#2a2a2a">0</div>
<div class="t" style="left:250px;width:58px;text-align:right;top:156.6px;color:#2a2a2a">12<em>-</em><i>二</i><i>月</i><em>-</em>19</div>
<div class="t" style="left:300px;width:60.30000000000001px;text-align:right;top:156.6px;color:#2a2a2a">15<em>-</em><i>二</i><i>月</i><em>-</em>19<em class="sp"> </em>A</div>
<div class="t" style="left:350px;width:56.5px;text-align:right;top:156.6px;color:#2a2a2a">09<em>-</em><i>二</i><i>月</i><em>-</em>19</div>
<div class="t" style="left:400px;width:53.5px;text-align:right;top:156.6px;color:#2a2a2a">12<em>-</em><i>二</i><i>月</i><em>-</em>19</div>
<div class="t" style="left:457.2px;width:47px;text-align:center;top:156.6px;color:#2a2a2a">-3</div>
<div class="ic" style="left:13.0px;top:168.4px"></div>
<div class="t" style="left:23.7px;top:166.2px;">CT-1090</div>
<div class="t" style="left:73px;top:166.2px;letter-spacing:0"><i style="font-size:7.8px">焊</i><i style="font-size:7.8px">接</i></div>
<div class="t" style="left:203.6px;width:27px;text-align:center;top:166.2px;color:#2a2a2a">35</div>
<div class="t" style="left:232px;width:27px;text-align:center;top:166.2px;color:#2a2a2a">0</div>
<div class="t" style="left:250px;width:58px;text-align:right;top:166.2px;color:#2a2a2a">16<em>-</em><i>二</i><i>月</i><em>-</em>19</div>
<div class="t" style="left:300px;width:60.30000000000001px;text-align:right;top:166.2px;color:#2a2a2a">24<em>-</em><i>三</i><i>月</i><em>-</em>19<em class="sp"> </em>A</div>
<div class="t" style="left:350px;width:56.5px;text-align:right;top:166.2px;color:#2a2a2a">13<em>-</em><i>二</i><i>月</i><em>-</em>19</div>
<div class="t" style="left:400px;width:53.5px;text-align:right;top:166.2px;color:#2a2a2a">19<em>-</em><i>三</i><i>月</i><em>-</em>19</div>
<div class="t" style="left:457.2px;width:47px;text-align:center;top:166.2px;color:#2a2a2a">-4</div>
<div class="ic" style="left:13.0px;top:177.9px"></div>
<div class="t" style="left:23.7px;top:175.4px;">CT-1100</div>
<div class="t" style="left:73px;top:175.4px;letter-spacing:0"><i style="font-size:7.8px">无</i><i style="font-size:7.8px">损</i><i style="font-size:7.8px">检</i><i style="font-size:7.8px">测</i></div>
<div class="t" style="left:203.6px;width:27px;text-align:center;top:175.4px;color:#2a2a2a">37</div>
<div class="t" style="left:232px;width:27px;text-align:center;top:175.4px;color:#2a2a2a">0</div>
<div class="t" style="left:250px;width:58px;text-align:right;top:175.4px;color:#2a2a2a">20<em>-</em><i>二</i><i>月</i><em>-</em>19</div>
<div class="t" style="left:300px;width:60.30000000000001px;text-align:right;top:175.4px;color:#2a2a2a">28<em>-</em><i>三</i><i>月</i><em>-</em>19<em class="sp"> </em>A</div>
<div class="t" style="left:350px;width:56.5px;text-align:right;top:175.4px;color:#2a2a2a">17<em>-</em><i>二</i><i>月</i><em>-</em>19</div>
<div class="t" style="left:400px;width:53.5px;text-align:right;top:175.4px;color:#2a2a2a">25<em>-</em><i>三</i><i>月</i><em>-</em>19</div>
<div class="t" style="left:457.2px;width:47px;text-align:center;top:175.4px;color:#2a2a2a">-3</div>
<div class="ic" style="left:13.0px;top:186.8px"></div>
<div class="t" style="left:23.7px;top:184.4px;">CT-1110</div>
<div class="t" style="left:73px;top:184.4px;letter-spacing:0"><i style="font-size:7.8px">防</i><i style="font-size:7.8px">腐</i></div>
<div class="t" style="left:203.6px;width:27px;text-align:center;top:184.4px;color:#2a2a2a">25</div>
<div class="t" style="left:232px;width:27px;text-align:center;top:184.4px;color:#2a2a2a">0</div>
<div class="t" style="left:250px;width:58px;text-align:right;top:184.4px;color:#2a2a2a">13<em>-</em><i>三</i><i>月</i><em>-</em>19</div>
<div class="t" style="left:300px;width:60.30000000000001px;text-align:right;top:184.4px;color:#2a2a2a">06<em>-</em><i>四</i><i>月</i><em>-</em>19<em class="sp"> </em>A</div>
<div class="t" style="left:350px;width:56.5px;text-align:right;top:184.4px;color:#2a2a2a">10<em>-</em><i>三</i><i>月</i><em>-</em>19</div>
<div class="t" style="left:400px;width:53.5px;text-align:right;top:184.4px;color:#2a2a2a">03<em>-</em><i>四</i><i>月</i><em>-</em>19</div>
<div class="t" style="left:457.2px;width:47px;text-align:center;top:184.4px;color:#2a2a2a">-3</div>
<div class="ic" style="left:13.0px;top:195.9px"></div>
<div class="t" style="left:23.7px;top:193.9px;">CT-1120</div>
<div class="t" style="left:73px;top:193.9px;letter-spacing:0"><i style="font-size:7.8px">管</i><i style="font-size:7.8px">沟</i><i style="font-size:7.8px">开</i><i style="font-size:7.8px">挖</i></div>
<div class="t" style="left:203.6px;width:27px;text-align:center;top:193.9px;color:#2a2a2a">8</div>
<div class="t" style="left:232px;width:27px;text-align:center;top:193.9px;color:#2a2a2a">0</div>
<div class="t" style="left:250px;width:58px;text-align:right;top:193.9px;color:#2a2a2a">07<em>-</em><i>四</i><i>月</i><em>-</em>19</div>
<div class="t" style="left:300px;width:60.30000000000001px;text-align:right;top:193.9px;color:#2a2a2a">14<em>-</em><i>四</i><i>月</i><em>-</em>19<em class="sp"> </em>A</div>
<div class="t" style="left:350px;width:56.5px;text-align:right;top:193.9px;color:#2a2a2a">04<em>-</em><i>四</i><i>月</i><em>-</em>19</div>
<div class="t" style="left:400px;width:53.5px;text-align:right;top:193.9px;color:#2a2a2a">11<em>-</em><i>四</i><i>月</i><em>-</em>19</div>
<div class="t" style="left:457.2px;width:47px;text-align:center;top:193.9px;color:#2a2a2a">-3</div>
<div class="ic" style="left:13.0px;top:205.6px"></div>
<div class="t" style="left:23.7px;top:203.2px;">CT-1140</div>
<div class="t" style="left:73px;top:203.2px;letter-spacing:0"><i style="font-size:7.8px">垫</i><i style="font-size:7.8px">层</i></div>
<div class="t" style="left:203.6px;width:27px;text-align:center;top:203.2px;color:#2a2a2a">8</div>
<div class="t" style="left:232px;width:27px;text-align:center;top:203.2px;color:#2a2a2a">0</div>
<div class="t" style="left:250px;width:58px;text-align:right;top:203.2px;color:#2a2a2a">11<em>-</em><i>四</i><i>月</i><em>-</em>19</div>
<div class="t" style="left:300px;width:60.30000000000001px;text-align:right;top:203.2px;color:#2a2a2a">18<em>-</em><i>四</i><i>月</i><em>-</em>19<em class="sp"> </em>A</div>
<div class="t" style="left:350px;width:56.5px;text-align:right;top:203.2px;color:#2a2a2a">08<em>-</em><i>四</i><i>月</i><em>-</em>19</div>
<div class="t" style="left:400px;width:53.5px;text-align:right;top:203.2px;color:#2a2a2a">15<em>-</em><i>四</i><i>月</i><em>-</em>19</div>
<div class="t" style="left:457.2px;width:47px;text-align:center;top:203.2px;color:#2a2a2a">-3</div>
<div class="ic" style="left:13.0px;top:214.7px"></div>
<div class="t" style="left:23.7px;top:212.8px;">CT-1150</div>
<div class="t" style="left:73px;top:212.8px;letter-spacing:0"><i style="font-size:7.8px">下</i><i style="font-size:7.8px">沟</i></div>
<div class="t" style="left:203.6px;width:27px;text-align:center;top:212.8px;color:#2a2a2a">8</div>
<div class="t" style="left:232px;width:27px;text-align:center;top:212.8px;color:#2a2a2a">0</div>
<div class="t" style="left:250px;width:58px;text-align:right;top:212.8px;color:#2a2a2a">11<em>-</em><i>四</i><i>月</i><em>-</em>19</div>
<div class="t" style="left:300px;width:60.30000000000001px;text-align:right;top:212.8px;color:#2a2a2a">18<em>-</em><i>四</i><i>月</i><em>-</em>19<em class="sp"> </em>A</div>
<div class="t" style="left:350px;width:56.5px;text-align:right;top:212.8px;color:#2a2a2a">08<em>-</em><i>四</i><i>月</i><em>-</em>19</div>
<div class="t" style="left:400px;width:53.5px;text-align:right;top:212.8px;color:#2a2a2a">15<em>-</em><i>四</i><i>月</i><em>-</em>19</div>
<div class="t" style="left:457.2px;width:47px;text-align:center;top:212.8px;color:#2a2a2a">-3</div>
<div class="ic" style="left:13.0px;top:224.7px"></div>
<div class="t" style="left:23.7px;top:222.6px;">CT-1160</div>
<div class="t" style="left:73px;top:222.6px;letter-spacing:0"><i style="font-size:7.8px">回</i><i style="font-size:7.8px">填</i></div>
<div class="t" style="left:203.6px;width:27px;text-align:center;top:222.6px;color:#2a2a2a">8</div>
<div class="t" style="left:232px;width:27px;text-align:center;top:222.6px;color:#2a2a2a">0</div>
<div class="t" style="left:250px;width:58px;text-align:right;top:222.6px;color:#2a2a2a">11<em>-</em><i>四</i><i>月</i><em>-</em>19</div>
<div class="t" style="left:300px;width:60.30000000000001px;text-align:right;top:222.6px;color:#2a2a2a">18<em>-</em><i>四</i><i>月</i><em>-</em>19<em class="sp"> </em>A</div>
<div class="t" style="left:350px;width:56.5px;text-align:right;top:222.6px;color:#2a2a2a">08<em>-</em><i>四</i><i>月</i><em>-</em>19</div>
<div class="t" style="left:400px;width:53.5px;text-align:right;top:222.6px;color:#2a2a2a">15<em>-</em><i>四</i><i>月</i><em>-</em>19</div>
<div class="t" style="left:457.2px;width:47px;text-align:center;top:222.6px;color:#2a2a2a">-3</div>
<div class="ic" style="left:13.0px;top:234.2px"></div>
<div class="t" style="left:23.7px;top:232.1px;">CT-1170</div>
<div class="t" style="left:73px;top:232.1px;letter-spacing:0"><i style="font-size:7.8px">警</i><i style="font-size:7.8px">示</i><i style="font-size:7.8px">带</i></div>
<div class="t" style="left:203.6px;width:27px;text-align:center;top:232.1px;color:#2a2a2a">8</div>
<div class="t" style="left:232px;width:27px;text-align:center;top:232.1px;color:#2a2a2a">0</div>
<div class="t" style="left:250px;width:58px;text-align:right;top:232.1px;color:#2a2a2a">11<em>-</em><i>四</i><i>月</i><em>-</em>19</div>
<div class="t" style="left:300px;width:60.30000000000001px;text-align:right;top:232.1px;color:#2a2a2a">18<em>-</em><i>四</i><i>月</i><em>-</em>19<em class="sp"> </em>A</div>
<div class="t" style="left:350px;width:56.5px;text-align:right;top:232.1px;color:#2a2a2a">08<em>-</em><i>四</i><i>月</i><em>-</em>19</div>
<div class="t" style="left:400px;width:53.5px;text-align:right;top:232.1px;color:#2a2a2a">15<em>-</em><i>四</i><i>月</i><em>-</em>19</div>
<div class="t" style="left:457.2px;width:47px;text-align:center;top:232.1px;color:#2a2a2a">-3</div>
<div class="ic" style="left:13.0px;top:243.7px"></div>
<div class="t" style="left:23.7px;top:241.7px;">CT-1180</div>
<div class="t" style="left:73px;top:241.7px;letter-spacing:0"><i style="font-size:7.8px">回</i><i style="font-size:7.8px">填</i><i style="font-size:7.8px">压</i><i style="font-size:7.8px">实</i></div>
<div class="t" style="left:203.6px;width:27px;text-align:center;top:241.7px;color:#2a2a2a">8</div>
<div class="t" style="left:232px;width:27px;text-align:center;top:241.7px;color:#2a2a2a">0</div>
<div class="t" style="left:250px;width:58px;text-align:right;top:241.7px;color:#2a2a2a">11<em>-</em><i>四</i><i>月</i><em>-</em>19</div>
<div class="t" style="left:300px;width:60.30000000000001px;text-align:right;top:241.7px;color:#2a2a2a">18<em>-</em><i>四</i><i>月</i><em>-</em>19<em class="sp"> </em>A</div>
<div class="t" style="left:350px;width:56.5px;text-align:right;top:241.7px;color:#2a2a2a">08<em>-</em><i>四</i><i>月</i><em>-</em>19</div>
<div class="t" style="left:400px;width:53.5px;text-align:right;top:241.7px;color:#2a2a2a">15<em>-</em><i>四</i><i>月</i><em>-</em>19</div>
<div class="t" style="left:457.2px;width:47px;text-align:center;top:241.7px;color:#2a2a2a">-3</div>
<div class="ic" style="left:13.0px;top:253.5px"></div>
<div class="t" style="left:23.7px;top:251.4px;">CT-1190</div>
<div class="t" style="left:73px;top:251.4px;letter-spacing:0"><i style="font-size:7.8px">阴</i><i style="font-size:7.8px">保</i><i style="font-size:7.8px">桩</i><i style="font-size:7.8px">和</i><i style="font-size:7.8px">标</i><i style="font-size:7.8px">志</i><i style="font-size:7.8px">桩</i><i style="font-size:7.8px">安</i><i style="font-size:7.8px">装</i></div>
<div class="t" style="left:203.6px;width:27px;text-align:center;top:251.4px;color:#2a2a2a">2</div>
<div class="t" style="left:232px;width:27px;text-align:center;top:251.4px;color:#2a2a2a">0</div>
<div class="t" style="left:250px;width:58px;text-align:right;top:251.4px;color:#2a2a2a">19<em>-</em><i>四</i><i>月</i><em>-</em>19</div>
<div class="t" style="left:300px;width:60.30000000000001px;text-align:right;top:251.4px;color:#2a2a2a">21<em>-</em><i>四</i><i>月</i><em>-</em>19<em class="sp"> </em>A</div>
<div class="t" style="left:350px;width:56.5px;text-align:right;top:251.4px;color:#2a2a2a">16<em>-</em><i>四</i><i>月</i><em>-</em>19</div>
<div class="t" style="left:400px;width:53.5px;text-align:right;top:251.4px;color:#2a2a2a">18<em>-</em><i>四</i><i>月</i><em>-</em>19</div>
<div class="t" style="left:457.2px;width:47px;text-align:center;top:251.4px;color:#2a2a2a">-3</div>
<div class="ic" style="left:13.0px;top:263.0px"></div>
<div class="t" style="left:23.7px;top:260.6px;">CT-1200</div>
<div class="t" style="left:73px;top:260.6px;letter-spacing:0"><i style="font-size:7.8px">地</i><i style="font-size:7.8px">貌</i><i style="font-size:7.8px">恢</i><i style="font-size:7.8px">复</i></div>
<div class="t" style="left:203.6px;width:27px;text-align:center;top:260.6px;color:#2a2a2a">4</div>
<div class="t" style="left:232px;width:27px;text-align:center;top:260.6px;color:#2a2a2a">0</div>
<div class="t" style="left:250px;width:58px;text-align:right;top:260.6px;color:#2a2a2a">21<em>-</em><i>四</i><i>月</i><em>-</em>19</div>
<div class="t" style="left:300px;width:60.30000000000001px;text-align:right;top:260.6px;color:#2a2a2a">25<em>-</em><i>四</i><i>月</i><em>-</em>19<em class="sp"> </em>A</div>
<div class="t" style="left:350px;width:56.5px;text-align:right;top:260.6px;color:#2a2a2a">18<em>-</em><i>四</i><i>月</i><em>-</em>19</div>
<div class="t" style="left:400px;width:53.5px;text-align:right;top:260.6px;color:#2a2a2a">22<em>-</em><i>四</i><i>月</i><em>-</em>19</div>
<div class="t" style="left:457.2px;width:47px;text-align:center;top:260.6px;color:#2a2a2a">-3</div>
<div class="wi" style="left:14px;top:271.3px;width:3.8px;height:3.6px"></div><div class="wi" style="left:16.2px;top:273.1px;width:3.8px;height:3.6px"></div>
<div class="t" style="left:24.4px;top:267.8px;font-weight:bold;color:#0000e0;letter-spacing:1.0px"><i style="font-size:5.0px">穿</i><i style="font-size:5.0px">越</i><i style="font-size:5.0px">公</i><i style="font-size:5.0px">路</i></div>
<div class="t" style="left:203.6px;width:27px;text-align:center;top:269.1px;color:#2020e0">35</div>
<div class="t" style="left:232px;width:27px;text-align:center;top:269.1px;color:#2020e0">0</div>
<div class="t" style="left:250px;width:58px;text-align:right;top:269.1px;color:#2020e0">16<em>-</em><i>二</i><i>月</i><em>-</em>19</div>
<div class="t" style="left:300px;width:60.30000000000001px;text-align:right;top:269.1px;color:#2020e0">22<em>-</em><i>三</i><i>月</i><em>-</em>19<em class="sp"> </em>A</div>
<div class="t" style="left:350px;width:56.5px;text-align:right;top:269.1px;color:#2020e0">13<em>-</em><i>二</i><i>月</i><em>-</em>19</div>
<div class="t" style="left:400px;width:53.5px;text-align:right;top:269.1px;color:#2020e0">19<em>-</em><i>三</i><i>月</i><em>-</em>19</div>
<div class="t" style="left:457.2px;width:47px;text-align:center;top:269.1px;color:#2020e0">-3</div>
<div class="ic" style="left:15.4px;top:280.0px"></div>
<div class="t" style="left:26.2px;top:277.9px;">CT-1130</div>
<div class="t" style="left:73px;top:277.9px;letter-spacing:0"><i style="font-size:7.8px">顶</i><i style="font-size:7.8px">管</i><i style="font-size:7.8px">穿</i><i style="font-size:7.8px">越</i></div>
<div class="t" style="left:203.6px;width:27px;text-align:center;top:277.9px;color:#2a2a2a">35</div>
<div class="t" style="left:232px;width:27px;text-align:center;top:277.9px;color:#2a2a2a">0</div>
<div class="t" style="left:250px;width:58px;text-align:right;top:277.9px;color:#2a2a2a">16<em>-</em><i>二</i><i>月</i><em>-</em>19</div>
<div class="t" style="left:300px;width:60.30000000000001px;text-align:right;top:277.9px;color:#2a2a2a">22<em>-</em><i>三</i><i>月</i><em>-</em>19<em class="sp"> </em>A</div>
<div class="t" style="left:350px;width:56.5px;text-align:right;top:277.9px;color:#2a2a2a">13<em>-</em><i>二</i><i>月</i><em>-</em>19</div>
<div class="t" style="left:400px;width:53.5px;text-align:right;top:277.9px;color:#2a2a2a">19<em>-</em><i>三</i><i>月</i><em>-</em>19</div>
<div class="t" style="left:457.2px;width:47px;text-align:center;top:277.9px;color:#2a2a2a">-3</div>
<div class="wi" style="left:14px;top:289.0px;width:3.8px;height:3.6px"></div><div class="wi" style="left:16.2px;top:290.8px;width:3.8px;height:3.6px"></div>
<div class="t" style="left:24.4px;top:285.9px;font-weight:bold;color:#0000e0;letter-spacing:1.0px"><i style="font-size:5.0px">连</i><i style="font-size:5.0px">头</i></div>
<div class="t" style="left:203.6px;width:27px;text-align:center;top:287.2px;color:#2020e0">7</div>
<div class="t" style="left:232px;width:27px;text-align:center;top:287.2px;color:#2020e0">0</div>
<div class="t" style="left:250px;width:58px;text-align:right;top:287.2px;color:#2020e0">19<em>-</em><i>四</i><i>月</i><em>-</em>19</div>
<div class="t" style="left:300px;width:60.30000000000001px;text-align:right;top:287.2px;color:#2020e0">25<em>-</em><i>四</i><i>月</i><em>-</em>19<em class="sp"> </em>A</div>
<div class="t" style="left:350px;width:56.5px;text-align:right;top:287.2px;color:#2020e0">16<em>-</em><i>四</i><i>月</i><em>-</em>19</div>
<div class="t" style="left:400px;width:53.5px;text-align:right;top:287.2px;color:#2020e0">22<em>-</em><i>四</i><i>月</i><em>-</em>19</div>
<div class="t" style="left:457.2px;width:47px;text-align:center;top:287.2px;color:#2020e0">-3</div>
<div class="ic" style="left:15.4px;top:298.4px"></div>
<div class="t" style="left:26.2px;top:296.2px;">CT-1020</div>
<div class="t" style="left:73px;top:296.2px;letter-spacing:0"><i style="font-size:7.8px">连</i><i style="font-size:7.8px">头</i></div>
<div class="t" style="left:203.6px;width:27px;text-align:center;top:296.2px;color:#2a2a2a">7</div>
<div class="t" style="left:232px;width:27px;text-align:center;top:296.2px;color:#2a2a2a">0</div>
<div class="t" style="left:250px;width:58px;text-align:right;top:296.2px;color:#2a2a2a">19<em>-</em><i>四</i><i>月</i><em>-</em>19</div>
<div class="t" style="left:300px;width:60.30000000000001px;text-align:right;top:296.2px;color:#2a2a2a">25<em>-</em><i>四</i><i>月</i><em>-</em>19<em class="sp"> </em>A</div>
<div class="t" style="left:350px;width:56.5px;text-align:right;top:296.2px;color:#2a2a2a">16<em>-</em><i>四</i><i>月</i><em>-</em>19</div>
<div class="t" style="left:400px;width:53.5px;text-align:right;top:296.2px;color:#2a2a2a">22<em>-</em><i>四</i><i>月</i><em>-</em>19</div>
<div class="t" style="left:457.2px;width:47px;text-align:center;top:296.2px;color:#2a2a2a">-3</div>
<div class="wi" style="left:14px;top:307.2px;width:3.8px;height:3.6px"></div><div class="wi" style="left:16.2px;top:309.0px;width:3.8px;height:3.6px"></div>
<div class="t" style="left:24.4px;top:304.1px;font-weight:bold;color:#0000e0;letter-spacing:1.0px"><i style="font-size:5.0px">起</i><i style="font-size:5.0px">点</i><i style="font-size:5.0px">锚</i><i style="font-size:5.0px">固</i><i style="font-size:5.0px">墩</i></div>
<div class="t" style="left:203.6px;width:27px;text-align:center;top:305.4px;color:#2020e0">43</div>
<div class="t" style="left:232px;width:27px;text-align:center;top:305.4px;color:#2020e0">0</div>
<div class="t" style="left:250px;width:58px;text-align:right;top:305.4px;color:#2020e0">02<em>-</em><i>二</i><i>月</i><em>-</em>19</div>
<div class="t" style="left:300px;width:60.30000000000001px;text-align:right;top:305.4px;color:#2020e0">16<em>-</em><i>三</i><i>月</i><em>-</em>19<em class="sp"> </em>A</div>
<div class="t" style="left:350px;width:56.5px;text-align:right;top:305.4px;color:#2020e0">02<em>-</em><i>二</i><i>月</i><em>-</em>19</div>
<div class="t" style="left:400px;width:53.5px;text-align:right;top:305.4px;color:#2020e0">16<em>-</em><i>三</i><i>月</i><em>-</em>19</div>
<div class="t" style="left:457.2px;width:47px;text-align:center;top:305.4px;color:#2020e0">0</div>
<div class="ic" style="left:15.4px;top:316.8px"></div>
<div class="t" style="left:26.2px;top:314.4px;">CT-1210</div>
<div class="t" style="left:73px;top:314.4px;letter-spacing:0"><i style="font-size:7.8px">基</i><i style="font-size:7.8px">坑</i><i style="font-size:7.8px">开</i><i style="font-size:7.8px">挖</i></div>
<div class="t" style="left:203.6px;width:27px;text-align:center;top:314.4px;color:#2a2a2a">3</div>
<div class="t" style="left:232px;width:27px;text-align:center;top:314.4px;color:#2a2a2a">0</div>
<div class="t" style="left:250px;width:58px;text-align:right;top:314.4px;color:#2a2a2a">02<em>-</em><i>二</i><i>月</i><em>-</em>19</div>
<div class="t" style="left:300px;width:60.30000000000001px;text-align:right;top:314.4px;color:#2a2a2a">04<em>-</em><i>二</i><i>月</i><em>-</em>19<em class="sp"> </em>A</div>
<div class="t" style="left:350px;width:56.5px;text-align:right;top:314.4px;color:#2a2a2a">02<em>-</em><i>二</i><i>月</i><em>-</em>19</div>
<div class="t" style="left:400px;width:53.5px;text-align:right;top:314.4px;color:#2a2a2a">04<em>-</em><i>二</i><i>月</i><em>-</em>19</div>
<div class="t" style="left:457.2px;width:47px;text-align:center;top:314.4px;color:#2a2a2a">0</div>
<div class="ic" style="left:15.4px;top:325.9px"></div>
<div class="t" style="left:26.2px;top:323.6px;">CT-1220</div>
<div class="t" style="left:73px;top:323.6px;letter-spacing:0"><i style="font-size:7.8px">垫</i><i style="font-size:7.8px">层</i></div>
<div class="t" style="left:203.6px;width:27px;text-align:center;top:323.6px;color:#2a2a2a">2</div>
<div class="t" style="left:232px;width:27px;text-align:center;top:323.6px;color:#2a2a2a">0</div>
<div class="t" style="left:250px;width:58px;text-align:right;top:323.6px;color:#2a2a2a">05<em>-</em><i>二</i><i>月</i><em>-</em>19</div>
<div class="t" style="left:300px;width:60.30000000000001px;text-align:right;top:323.6px;color:#2a2a2a">06<em>-</em><i>二</i><i>月</i><em>-</em>19<em class="sp"> </em>A</div>
<div class="t" style="left:350px;width:56.5px;text-align:right;top:323.6px;color:#2a2a2a">05<em>-</em><i>二</i><i>月</i><em>-</em>19</div>
<div class="t" style="left:400px;width:53.5px;text-align:right;top:323.6px;color:#2a2a2a">06<em>-</em><i>二</i><i>月</i><em>-</em>19</div>
<div class="t" style="left:457.2px;width:47px;text-align:center;top:323.6px;color:#2a2a2a">0</div>
<div class="ic" style="left:15.4px;top:335.0px"></div>
<div class="t" style="left:26.2px;top:332.9px;">CT-1230</div>
<div class="t" style="left:73px;top:332.9px;letter-spacing:0"><i style="font-size:7.8px">锚</i><i style="font-size:7.8px">固</i><i style="font-size:7.8px">法</i><i style="font-size:7.8px">兰</i><i style="font-size:7.8px">安</i><i style="font-size:7.8px">装</i></div>
<div class="t" style="left:203.6px;width:27px;text-align:center;top:332.9px;color:#2a2a2a">3</div>
<div class="t" style="left:232px;width:27px;text-align:center;top:332.9px;color:#2a2a2a">0</div>
<div class="t" style="left:250px;width:58px;text-align:right;top:332.9px;color:#2a2a2a">07<em>-</em><i>二</i><i>月</i><em>-</em>19</div>
<div class="t" style="left:300px;width:60.30000000000001px;text-align:right;top:332.9px;color:#2a2a2a">09<em>-</em><i>二</i><i>月</i><em>-</em>19<em class="sp"> </em>A</div>
<div class="t" style="left:350px;width:56.5px;text-align:right;top:332.9px;color:#2a2a2a">07<em>-</em><i>二</i><i>月</i><em>-</em>19</div>
<div class="t" style="left:400px;width:53.5px;text-align:right;top:332.9px;color:#2a2a2a">09<em>-</em><i>二</i><i>月</i><em>-</em>19</div>
<div class="t" style="left:457.2px;width:47px;text-align:center;top:332.9px;color:#2a2a2a">0</div>
<div class="ic" style="left:15.4px;top:344.5px"></div>
<div class="t" style="left:26.2px;top:342.4px;">CT-1240</div>
<div class="t" style="left:73px;top:342.4px;letter-spacing:0"><i style="font-size:7.8px">钢</i><i style="font-size:7.8px">筋</i><i style="font-size:7.8px">绑</i><i style="font-size:7.8px">扎</i><i style="font-size:7.8px">及</i><i style="font-size:7.8px">支</i><i style="font-size:7.8px">模</i></div>
<div class="t" style="left:203.6px;width:27px;text-align:center;top:342.4px;color:#2a2a2a">7</div>
<div class="t" style="left:232px;width:27px;text-align:center;top:342.4px;color:#2a2a2a">0</div>
<div class="t" style="left:250px;width:58px;text-align:right;top:342.4px;color:#2a2a2a">10<em>-</em><i>二</i><i>月</i><em>-</em>19</div>
<div class="t" style="left:300px;width:60.30000000000001px;text-align:right;top:342.4px;color:#2a2a2a">16<em>-</em><i>二</i><i>月</i><em>-</em>19<em class="sp"> </em>A</div>
<div class="t" style="left:350px;width:56.5px;text-align:right;top:342.4px;color:#2a2a2a">10<em>-</em><i>二</i><i>月</i><em>-</em>19</div>
<div class="t" style="left:400px;width:53.5px;text-align:right;top:342.4px;color:#2a2a2a">16<em>-</em><i>二</i><i>月</i><em>-</em>19</div>
<div class="t" style="left:457.2px;width:47px;text-align:center;top:342.4px;color:#2a2a2a">0</div>
<div class="ic" style="left:15.4px;top:354.1px"></div>
<div class="t" style="left:26.2px;top:351.8px;">CT-1250</div>
<div class="t" style="left:73px;top:351.8px;letter-spacing:0"><i style="font-size:7.8px">混</i><i style="font-size:7.8px">凝</i><i style="font-size:7.8px">土</i><i style="font-size:7.8px">浇</i><i style="font-size:7.8px">筑</i><i style="font-size:7.8px">与</i><i style="font-size:7.8px">养</i><i style="font-size:7.8px">护</i></div>
<div class="t" style="left:203.6px;width:27px;text-align:center;top:351.8px;color:#2a2a2a">21</div>
<div class="t" style="left:232px;width:27px;text-align:center;top:351.8px;color:#2a2a2a">0</div>
<div class="t" style="left:250px;width:58px;text-align:right;top:351.8px;color:#2a2a2a">17<em>-</em><i>二</i><i>月</i><em>-</em>19</div>
<div class="t" style="left:300px;width:60.30000000000001px;text-align:right;top:351.8px;color:#2a2a2a">09<em>-</em><i>三</i><i>月</i><em>-</em>19<em class="sp"> </em>A</div>
<div class="t" style="left:350px;width:56.5px;text-align:right;top:351.8px;color:#2a2a2a">17<em>-</em><i>二</i><i>月</i><em>-</em>19</div>
<div class="t" style="left:400px;width:53.5px;text-align:right;top:351.8px;color:#2a2a2a">09<em>-</em><i>三</i><i>月</i><em>-</em>19</div>
<div class="t" style="left:457.2px;width:47px;text-align:center;top:351.8px;color:#2a2a2a">0</div>
<div class="ic" style="left:15.4px;top:363.2px"></div>
<div class="t" style="left:26.2px;top:361.1px;">CT-1260</div>
<div class="t" style="left:73px;top:361.1px;letter-spacing:0"><i style="font-size:7.8px">防</i><i style="font-size:7.8px">腐</i><i style="font-size:7.8px">及</i><i style="font-size:7.8px">回</i><i style="font-size:7.8px">填</i></div>
<div class="t" style="left:203.6px;width:27px;text-align:center;top:361.1px;color:#2a2a2a">7</div>
<div class="t" style="left:232px;width:27px;text-align:center;top:361.1px;color:#2a2a2a">0</div>
<div class="t" style="left:250px;width:58px;text-align:right;top:361.1px;color:#2a2a2a">10<em>-</em><i>三</i><i>月</i><em>-</em>19</div>
<div class="t" style="left:300px;width:60.30000000000001px;text-align:right;top:361.1px;color:#2a2a2a">16<em>-</em><i>三</i><i>月</i><em>-</em>19<em class="sp"> </em>A</div>
<div class="t" style="left:350px;width:56.5px;text-align:right;top:361.1px;color:#2a2a2a">10<em>-</em><i>三</i><i>月</i><em>-</em>19</div>
<div class="t" style="left:400px;width:53.5px;text-align:right;top:361.1px;color:#2a2a2a">16<em>-</em><i>三</i><i>月</i><em>-</em>19</div>
<div class="t" style="left:457.2px;width:47px;text-align:center;top:361.1px;color:#2a2a2a">0</div>
<div class="wi" style="left:14px;top:372.1px;width:3.8px;height:3.6px"></div><div class="wi" style="left:16.2px;top:373.9px;width:3.8px;height:3.6px"></div>
<div class="t" style="left:24.4px;top:369.0px;font-weight:bold;color:#0000e0;letter-spacing:1.0px"><i style="font-size:5.0px">终</i><i style="font-size:5.0px">点</i><i style="font-size:5.0px">锚</i><i style="font-size:5.0px">固</i><i style="font-size:5.0px">墩</i></div>
<div class="t" style="left:203.6px;width:27px;text-align:center;top:370.3px;color:#2020e0">68</div>
<div class="t" style="left:232px;width:27px;text-align:center;top:370.3px;color:#2020e0">0</div>
<div class="t" style="left:250px;width:58px;text-align:right;top:370.3px;color:#2020e0">17<em>-</em><i>二</i><i>月</i><em>-</em>19</div>
<div class="t" style="left:300px;width:60.30000000000001px;text-align:right;top:370.3px;color:#2020e0">25<em>-</em><i>四</i><i>月</i><em>-</em>19<em class="sp"> </em>A</div>
<div class="t" style="left:350px;width:56.5px;text-align:right;top:370.3px;color:#2020e0">17<em>-</em><i>二</i><i>月</i><em>-</em>19</div>
<div class="t" style="left:400px;width:53.5px;text-align:right;top:370.3px;color:#2020e0">31<em>-</em><i>三</i><i>月</i><em>-</em>19</div>
<div class="t" style="left:457.2px;width:47px;text-align:center;top:370.3px;color:#2020e0">-25</div>
<div class="ic" style="left:15.4px;top:381.5px"></div>
<div class="t" style="left:26.2px;top:379.0px;">CT-1270</div>
<div class="t" style="left:73px;top:379.0px;letter-spacing:0"><i style="font-size:7.8px">基</i><i style="font-size:7.8px">坑</i><i style="font-size:7.8px">开</i><i style="font-size:7.8px">挖</i></div>
<div class="t" style="left:203.6px;width:27px;text-align:center;top:379.0px;color:#2a2a2a">28</div>
<div class="t" style="left:232px;width:27px;text-align:center;top:379.0px;color:#2a2a2a">0</div>
<div class="t" style="left:250px;width:58px;text-align:right;top:379.0px;color:#2a2a2a">17<em>-</em><i>二</i><i>月</i><em>-</em>19</div>
<div class="t" style="left:300px;width:60.30000000000001px;text-align:right;top:379.0px;color:#2a2a2a">16<em>-</em><i>三</i><i>月</i><em>-</em>19<em class="sp"> </em>A</div>
<div class="t" style="left:350px;width:56.5px;text-align:right;top:379.0px;color:#2a2a2a">17<em>-</em><i>二</i><i>月</i><em>-</em>19</div>
<div class="t" style="left:400px;width:53.5px;text-align:right;top:379.0px;color:#2a2a2a">19<em>-</em><i>二</i><i>月</i><em>-</em>19</div>
<div class="t" style="left:457.2px;width:47px;text-align:center;top:379.0px;color:#2a2a2a">-25</div>
<div class="ic" style="left:15.4px;top:390.3px"></div>
<div class="t" style="left:26.2px;top:388.1px;">CT-1280</div>
<div class="t" style="left:73px;top:388.1px;letter-spacing:0"><i style="font-size:7.8px">垫</i><i style="font-size:7.8px">层</i></div>
<div class="t" style="left:203.6px;width:27px;text-align:center;top:388.1px;color:#2a2a2a">2</div>
<div class="t" style="left:232px;width:27px;text-align:center;top:388.1px;color:#2a2a2a">0</div>
<div class="t" style="left:250px;width:58px;text-align:right;top:388.1px;color:#2a2a2a">17<em>-</em><i>三</i><i>月</i><em>-</em>19</div>
<div class="t" style="left:300px;width:60.30000000000001px;text-align:right;top:388.1px;color:#2a2a2a">18<em>-</em><i>三</i><i>月</i><em>-</em>19<em class="sp"> </em>A</div>
<div class="t" style="left:350px;width:56.5px;text-align:right;top:388.1px;color:#2a2a2a">20<em>-</em><i>二</i><i>月</i><em>-</em>19</div>
<div class="t" style="left:400px;width:53.5px;text-align:right;top:388.1px;color:#2a2a2a">21<em>-</em><i>二</i><i>月</i><em>-</em>19</div>
<div class="t" style="left:457.2px;width:47px;text-align:center;top:388.1px;color:#2a2a2a">-25</div>
<div class="ic" style="left:15.4px;top:399.6px"></div>
<div class="t" style="left:26.2px;top:397.6px;">CT-1290</div>
<div class="t" style="left:73px;top:397.6px;letter-spacing:0"><i style="font-size:7.8px">锚</i><i style="font-size:7.8px">固</i><i style="font-size:7.8px">法</i><i style="font-size:7.8px">兰</i><i style="font-size:7.8px">安</i><i style="font-size:7.8px">装</i></div>
<div class="t" style="left:203.6px;width:27px;text-align:center;top:397.6px;color:#2a2a2a">3</div>
<div class="t" style="left:232px;width:27px;text-align:center;top:397.6px;color:#2a2a2a">0</div>
<div class="t" style="left:250px;width:58px;text-align:right;top:397.6px;color:#2a2a2a">19<em>-</em><i>三</i><i>月</i><em>-</em>19</div>
<div class="t" style="left:300px;width:60.30000000000001px;text-align:right;top:397.6px;color:#2a2a2a">21<em>-</em><i>三</i><i>月</i><em>-</em>19<em class="sp"> </em>A</div>
<div class="t" style="left:350px;width:56.5px;text-align:right;top:397.6px;color:#2a2a2a">22<em>-</em><i>二</i><i>月</i><em>-</em>19</div>
<div class="t" style="left:400px;width:53.5px;text-align:right;top:397.6px;color:#2a2a2a">24<em>-</em><i>二</i><i>月</i><em>-</em>19</div>
<div class="t" style="left:457.2px;width:47px;text-align:center;top:397.6px;color:#2a2a2a">-25</div>
<div class="ic" style="left:15.4px;top:409.4px"></div>
<div class="t" style="left:26.2px;top:407.1px;">CT-1300</div>
<div class="t" style="left:73px;top:407.1px;letter-spacing:0"><i style="font-size:7.8px">钢</i><i style="font-size:7.8px">筋</i><i style="font-size:7.8px">绑</i><i style="font-size:7.8px">扎</i><i style="font-size:7.8px">及</i><i style="font-size:7.8px">支</i><i style="font-size:7.8px">模</i></div>
<div class="t" style="left:203.6px;width:27px;text-align:center;top:407.1px;color:#2a2a2a">7</div>
<div class="t" style="left:232px;width:27px;text-align:center;top:407.1px;color:#2a2a2a">0</div>
<div class="t" style="left:250px;width:58px;text-align:right;top:407.1px;color:#2a2a2a">22<em>-</em><i>三</i><i>月</i><em>-</em>19</div>
<div class="t" style="left:300px;width:60.30000000000001px;text-align:right;top:407.1px;color:#2a2a2a">28<em>-</em><i>三</i><i>月</i><em>-</em>19<em class="sp"> </em>A</div>
<div class="t" style="left:350px;width:56.5px;text-align:right;top:407.1px;color:#2a2a2a">25<em>-</em><i>二</i><i>月</i><em>-</em>19</div>
<div class="t" style="left:400px;width:53.5px;text-align:right;top:407.1px;color:#2a2a2a">03<em>-</em><i>三</i><i>月</i><em>-</em>19</div>
<div class="t" style="left:457.2px;width:47px;text-align:center;top:407.1px;color:#2a2a2a">-25</div>
<div class="ic" style="left:15.4px;top:418.6px"></div>
<div class="t" style="left:26.2px;top:416.6px;">CT-1310</div>
<div class="t" style="left:73px;top:416.6px;letter-spacing:0"><i style="font-size:7.8px">混</i><i style="font-size:7.8px">凝</i><i style="font-size:7.8px">土</i><i style="font-size:7.8px">浇</i><i style="font-size:7.8px">筑</i><i style="font-size:7.8px">与</i><i style="font-size:7.8px">养</i><i style="font-size:7.8px">护</i></div>
<div class="t" style="left:203.6px;width:27px;text-align:center;top:416.6px;color:#2a2a2a">21</div>
<div class="t" style="left:232px;width:27px;text-align:center;top:416.6px;color:#2a2a2a">0</div>
<div class="t" style="left:250px;width:58px;text-align:right;top:416.6px;color:#2a2a2a">29<em>-</em><i>三</i><i>月</i><em>-</em>19</div>
<div class="t" style="left:300px;width:60.30000000000001px;text-align:right;top:416.6px;color:#2a2a2a">18<em>-</em><i>四</i><i>月</i><em>-</em>19<em class="sp"> </em>A</div>
<div class="t" style="left:350px;width:56.5px;text-align:right;top:416.6px;color:#2a2a2a">04<em>-</em><i>三</i><i>月</i><em>-</em>19</div>
<div class="t" style="left:400px;width:53.5px;text-align:right;top:416.6px;color:#2a2a2a">24<em>-</em><i>三</i><i>月</i><em>-</em>19</div>
<div class="t" style="left:457.2px;width:47px;text-align:center;top:416.6px;color:#2a2a2a">-25</div>
<div class="ic" style="left:15.4px;top:428.3px"></div>
<div class="t" style="left:26.2px;top:426.2px;">CT-1320</div>
<div class="t" style="left:73px;top:426.2px;letter-spacing:0"><i style="font-size:7.8px">防</i><i style="font-size:7.8px">腐</i><i style="font-size:7.8px">及</i><i style="font-size:7.8px">回</i><i style="font-size:7.8px">填</i></div>
<div class="t" style="left:203.6px;width:27px;text-align:center;top:426.2px;color:#2a2a2a">7</div>
<div class="t" style="left:232px;width:27px;text-align:center;top:426.2px;color:#2a2a2a">0</div>
<div class="t" style="left:250px;width:58px;text-align:right;top:426.2px;color:#2a2a2a">19<em>-</em><i>四</i><i>月</i><em>-</em>19</div>
<div class="t" style="left:300px;width:60.30000000000001px;text-align:right;top:426.2px;color:#2a2a2a">25<em>-</em><i>四</i><i>月</i><em>-</em>19<em class="sp"> </em>A</div>
<div class="t" style="left:350px;width:56.5px;text-align:right;top:426.2px;color:#2a2a2a">25<em>-</em><i>三</i><i>月</i><em>-</em>19</div>
<div class="t" style="left:400px;width:53.5px;text-align:right;top:426.2px;color:#2a2a2a">31<em>-</em><i>三</i><i>月</i><em>-</em>19</div>
<div class="t" style="left:457.2px;width:47px;text-align:center;top:426.2px;color:#2a2a2a">-25</div>
<div class="wi" style="left:14px;top:437.2px;width:3.8px;height:3.6px"></div><div class="wi" style="left:16.2px;top:439.0px;width:3.8px;height:3.6px"></div>
<div class="t" style="left:24.4px;top:434.0px;font-weight:bold;color:#0000e0;letter-spacing:1.0px"><i style="font-size:5.0px">水</i><i style="font-size:5.0px">压</i><i style="font-size:5.0px">试</i><i style="font-size:5.0px">验</i></div>
<div class="t" style="left:203.6px;width:27px;text-align:center;top:435.3px;color:#2020e0">8</div>
<div class="t" style="left:232px;width:27px;text-align:center;top:435.3px;color:#2020e0">0</div>
<div class="t" style="left:250px;width:58px;text-align:right;top:435.3px;color:#2020e0">26<em>-</em><i>四</i><i>月</i><em>-</em>19</div>
<div class="t" style="left:300px;width:60.30000000000001px;text-align:right;top:435.3px;color:#2020e0">03<em>-</em><i>五</i><i>月</i><em>-</em>19<em class="sp"> </em>A</div>
<div class="t" style="left:350px;width:56.5px;text-align:right;top:435.3px;color:#2020e0">23<em>-</em><i>四</i><i>月</i><em>-</em>19</div>
<div class="t" style="left:400px;width:53.5px;text-align:right;top:435.3px;color:#2020e0">30<em>-</em><i>四</i><i>月</i><em>-</em>19</div>
<div class="t" style="left:457.2px;width:47px;text-align:center;top:435.3px;color:#2020e0">-3</div>
<div class="ic" style="left:15.4px;top:446.6px"></div>
<div class="t" style="left:26.2px;top:444.1px;">CT-1030</div>
<div class="t" style="left:73px;top:444.1px;letter-spacing:0"><i style="font-size:7.8px">管</i><i style="font-size:7.8px">线</i><i style="font-size:7.8px">吹</i><i style="font-size:7.8px">扫</i></div>
<div class="t" style="left:203.6px;width:27px;text-align:center;top:444.1px;color:#2a2a2a">1</div>
<div class="t" style="left:232px;width:27px;text-align:center;top:444.1px;color:#2a2a2a">0</div>
<div class="t" style="left:250px;width:58px;text-align:right;top:444.1px;color:#2a2a2a">26<em>-</em><i>四</i><i>月</i><em>-</em>19</div>
<div class="t" style="left:300px;width:60.30000000000001px;text-align:right;top:444.1px;color:#2a2a2a">26<em>-</em><i>四</i><i>月</i><em>-</em>19<em class="sp"> </em>A</div>
<div class="t" style="left:350px;width:56.5px;text-align:right;top:444.1px;color:#2a2a2a">23<em>-</em><i>四</i><i>月</i><em>-</em>19</div>
<div class="t" style="left:400px;width:53.5px;text-align:right;top:444.1px;color:#2a2a2a">23<em>-</em><i>四</i><i>月</i><em>-</em>19</div>
<div class="t" style="left:457.2px;width:47px;text-align:center;top:444.1px;color:#2a2a2a">-3</div>
<div class="ic" style="left:15.4px;top:455.4px"></div>
<div class="t" style="left:26.2px;top:453.2px;">CT-1040</div>
<div class="t" style="left:73px;top:453.2px;letter-spacing:0"><i style="font-size:7.8px">试</i><i style="font-size:7.8px">压</i></div>
<div class="t" style="left:203.6px;width:27px;text-align:center;top:453.2px;color:#2a2a2a">6</div>
<div class="t" style="left:232px;width:27px;text-align:center;top:453.2px;color:#2a2a2a">0</div>
<div class="t" style="left:250px;width:58px;text-align:right;top:453.2px;color:#2a2a2a">27<em>-</em><i>四</i><i>月</i><em>-</em>19</div>
<div class="t" style="left:300px;width:60.30000000000001px;text-align:right;top:453.2px;color:#2a2a2a">02<em>-</em><i>五</i><i>月</i><em>-</em>19<em class="sp"> </em>A</div>
<div class="t" style="left:350px;width:56.5px;text-align:right;top:453.2px;color:#2a2a2a">24<em>-</em><i>四</i><i>月</i><em>-</em>19</div>
<div class="t" style="left:400px;width:53.5px;text-align:right;top:453.2px;color:#2a2a2a">29<em>-</em><i>四</i><i>月</i><em>-</em>19</div>
<div class="t" style="left:457.2px;width:47px;text-align:center;top:453.2px;color:#2a2a2a">-3</div>
<div class="ic" style="left:15.4px;top:464.7px"></div>
<div class="t" style="left:26.2px;top:462.4px;">CT-1050</div>
<div class="t" style="left:73px;top:462.4px;letter-spacing:0"><i style="font-size:7.8px">干</i><i style="font-size:7.8px">燥</i></div>
<div class="t" style="left:203.6px;width:27px;text-align:center;top:462.4px;color:#2a2a2a">1</div>
<div class="t" style="left:232px;width:27px;text-align:center;top:462.4px;color:#2a2a2a">0</div>
<div class="t" style="left:250px;width:58px;text-align:right;top:462.4px;color:#2a2a2a">03<em>-</em><i>五</i><i>月</i><em>-</em>19</div>
<div class="t" style="left:300px;width:60.30000000000001px;text-align:right;top:462.4px;color:#2a2a2a">03<em>-</em><i>五</i><i>月</i><em>-</em>19<em class="sp"> </em>A</div>
<div class="t" style="left:350px;width:56.5px;text-align:right;top:462.4px;color:#2a2a2a">30<em>-</em><i>四</i><i>月</i><em>-</em>19</div>
<div class="t" style="left:400px;width:53.5px;text-align:right;top:462.4px;color:#2a2a2a">30<em>-</em><i>四</i><i>月</i><em>-</em>19</div>
<div class="t" style="left:457.2px;width:47px;text-align:center;top:462.4px;color:#2a2a2a">-3</div>
<div class="t" style="left:578.2px;top:47.8px;letter-spacing:-0.6px">30<em>-</em><i>一</i><i>月</i><em>-</em>19<em class="sp"> </em>A</div>
<div class="t" style="left:684.6px;top:57.8px;letter-spacing:-0.6px">03<em>-</em><i>五</i><i>月</i><em>-</em>19<em class="sp"> </em>A</div>
<div class="hd" style="left:511.70000000000005px;width:20px;text-align:center;top:3.0px;font-size:4.9px;letter-spacing:-0.1px;font-weight:normal">2018</div>
<div class="hd" style="left:634.3px;width:20px;text-align:center;top:3.0px;font-size:4.9px;letter-spacing:-0.1px;font-weight:normal">2019</div>
<div class="hd" style="left:504.5px;width:34.89999999999998px;text-align:center;top:10.7px">十二月</div>
<div class="hd" style="left:539.4px;width:35.80000000000007px;text-align:center;top:10.7px">一月</div>
<div class="hd" style="left:575.2px;width:32.299999999999955px;text-align:center;top:10.7px">二月</div>
<div class="hd" style="left:607.5px;width:35.799999999999955px;text-align:center;top:10.7px">三月</div>
<div class="hd" style="left:643.3px;width:34.700000000000045px;text-align:center;top:10.7px">四月</div>
<div class="hd" style="left:678.0px;width:35.5px;text-align:center;top:10.7px">五月</div>
<div class="hd" style="left:713.5px;width:34.10000000000002px;text-align:center;top:10.7px">六月</div></body></html>
